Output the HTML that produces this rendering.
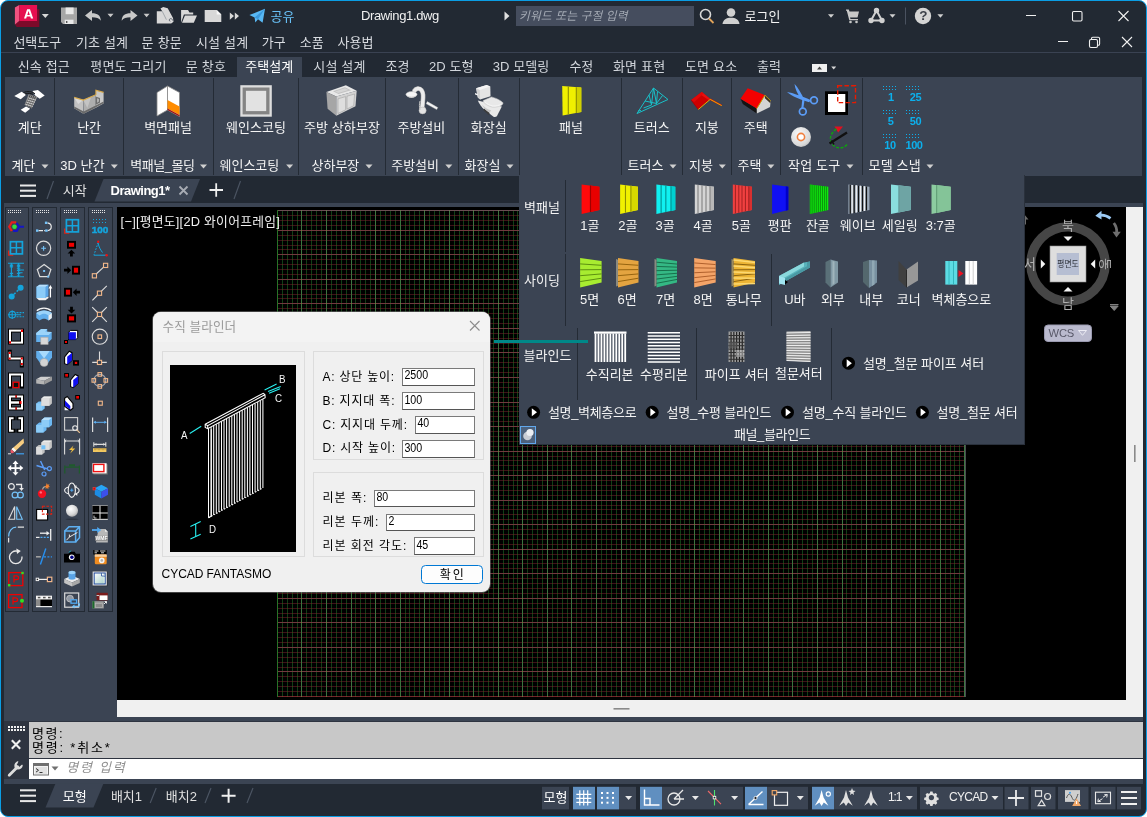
<!DOCTYPE html><html lang="ko"><head><meta charset="utf-8"><title>Drawing1.dwg</title><style>

html,body{margin:0;padding:0;background:#fff;}
body{width:1147px;height:817px;overflow:hidden;position:relative;font-family:"Liberation Sans",sans-serif;}
#win{position:absolute;left:0;top:0;width:1145px;height:815px;border:1px solid #0a9de4;border-radius:8px;background:#222933;overflow:hidden;}
.layer{position:absolute;left:-1px;top:-1px;width:1147px;height:817px;}
.layer>div{position:absolute;box-sizing:border-box;}
.ov{position:absolute;left:0;top:0;pointer-events:none;}
.t{position:absolute;white-space:nowrap;line-height:1;font-family:"Liberation Sans",sans-serif;}
.k{position:absolute;white-space:nowrap;line-height:1;color:transparent;font-family:"Liberation Sans","Noto Sans CJK KR",sans-serif;overflow:hidden;max-width:200px;max-height:16px;}
.tx{font-family:"Liberation Sans","Noto Sans CJK KR",sans-serif;}

</style></head><body>
<svg width="0" height="0" style="position:absolute"><defs><radialGradient id="gcd" cx=".4" cy=".35" r=".8"><stop offset="0" stop-color="#fafafa"/><stop offset=".7" stop-color="#d8d8d8"/><stop offset="1" stop-color="#a8a8a8"/></radialGradient><radialGradient id="gsph" cx=".4" cy=".35" r=".75"><stop offset="0" stop-color="#fff"/><stop offset=".6" stop-color="#d8d8d8"/><stop offset="1" stop-color="#9c9c9c"/></radialGradient><linearGradient id="gdoc" x1="0" y1="0" x2="1" y2="1"><stop offset="0" stop-color="#fff"/><stop offset="1" stop-color="#a8d0c8"/></linearGradient></defs></svg>
<div id="win">
<div class="layer" id="L_base">
<div style="left:0px;top:52px;width:1147px;height:1px;background:#3a4252;"></div>
<div style="left:237px;top:57px;width:65px;height:21px;background:#3b4453;"></div>
<div style="left:5px;top:77px;width:1137px;height:98.7px;background:#3b4453;"></div>
<div style="left:4px;top:203px;width:1139px;height:518px;background:#3b4453;"></div>
<div style="left:117px;top:207px;width:1009px;height:493px;background:#000;"></div>
<div style="left:1126px;top:207px;width:17px;height:510px;background:#f0f0f0;"></div>
<div style="left:117px;top:700px;width:1026px;height:17px;background:#f0f0f0;"></div>
<div style="left:516px;top:6px;width:178px;height:20px;background:#454d5e;"></div>
<div style="left:4px;top:721px;width:1139px;height:59px;background:#2e3440;"></div>
<div style="left:4px;top:779px;width:1139px;height:5px;background:#3b4453;"></div>
<div style="left:29px;top:722px;width:1114px;height:36px;background:#c8c8c8;"></div>
<div style="left:29px;top:759px;width:1114px;height:20px;background:#ffffff;"></div>
<svg class="ov" width="1147" height="817" viewBox="0 0 1147 817"><g fill="none" stroke-width="1" shape-rendering="crispEdges"><path d="M282.5 210V697M287.5 210V697M292.5 210V697M297.5 210V697M306.5 210V697M311.5 210V697M316.5 210V697M321.5 210V697M331.5 210V697M336.5 210V697M341.5 210V697M346.5 210V697M355.5 210V697M360.5 210V697M365.5 210V697M370.5 210V697M380.5 210V697M385.5 210V697M390.5 210V697M395.5 210V697M405.5 210V697M409.5 210V697M414.5 210V697M419.5 210V697M429.5 210V697M434.5 210V697M439.5 210V697M444.5 210V697M454.5 210V697M459.5 210V697M463.5 210V697M468.5 210V697M478.5 210V697M483.5 210V697M488.5 210V697M493.5 210V697M503.5 210V697M508.5 210V697M513.5 210V697M517.5 210V697M527.5 210V697M532.5 210V697M537.5 210V697M542.5 210V697M552.5 210V697M557.5 210V697M562.5 210V697M567.5 210V697M576.5 210V697M581.5 210V697M586.5 210V697M591.5 210V697M601.5 210V697M606.5 210V697M611.5 210V697M616.5 210V697M626.5 210V697M630.5 210V697M635.5 210V697M640.5 210V697M650.5 210V697M655.5 210V697M660.5 210V697M665.5 210V697M675.5 210V697M680.5 210V697M684.5 210V697M689.5 210V697M699.5 210V697M704.5 210V697M709.5 210V697M714.5 210V697M724.5 210V697M729.5 210V697M734.5 210V697M738.5 210V697M748.5 210V697M753.5 210V697M758.5 210V697M763.5 210V697M773.5 210V697M778.5 210V697M783.5 210V697M788.5 210V697M797.5 210V697M802.5 210V697M807.5 210V697M812.5 210V697M822.5 210V697M827.5 210V697M832.5 210V697M837.5 210V697M846.5 210V697M851.5 210V697M856.5 210V697M861.5 210V697M871.5 210V697M876.5 210V697M881.5 210V697M886.5 210V697M896.5 210V697M900.5 210V697M905.5 210V697M910.5 210V697M920.5 210V697M925.5 210V697M930.5 210V697M935.5 210V697M945.5 210V697M950.5 210V697M954.5 210V697M959.5 210V697" stroke="#123e16"/><path d="M301.5 210V697M326.5 210V697M351.5 210V697M375.5 210V697M400.5 210V697M424.5 210V697M449.5 210V697M473.5 210V697M498.5 210V697M522.5 210V697M547.5 210V697M571.5 210V697M596.5 210V697M621.5 210V697M645.5 210V697M670.5 210V697M694.5 210V697M719.5 210V697M743.5 210V697M768.5 210V697M792.5 210V697M817.5 210V697M842.5 210V697M866.5 210V697M891.5 210V697M915.5 210V697M940.5 210V697" stroke="#3c733e"/><g style="mix-blend-mode:lighten"><path d="M277 691.5H965M277 686.5H965M277 681.5H965M277 676.5H965M277 667.5H965M277 662.5H965M277 657.5H965M277 652.5H965M277 642.5H965M277 637.5H965M277 632.5H965M277 627.5H965M277 617.5H965M277 613.5H965M277 608.5H965M277 603.5H965M277 593.5H965M277 588.5H965M277 583.5H965M277 578.5H965M277 568.5H965M277 563.5H965M277 559.5H965M277 554.5H965M277 544.5H965M277 539.5H965M277 534.5H965M277 529.5H965M277 519.5H965M277 514.5H965M277 509.5H965M277 505.5H965M277 495.5H965M277 490.5H965M277 485.5H965M277 480.5H965M277 470.5H965M277 465.5H965M277 460.5H965M277 456.5H965M277 446.5H965M277 441.5H965M277 436.5H965M277 431.5H965M277 421.5H965M277 416.5H965M277 411.5H965M277 406.5H965M277 397.5H965M277 392.5H965M277 387.5H965M277 382.5H965M277 372.5H965M277 367.5H965M277 362.5H965M277 357.5H965M277 348.5H965M277 343.5H965M277 338.5H965M277 333.5H965M277 323.5H965M277 318.5H965M277 313.5H965M277 308.5H965M277 298.5H965M277 294.5H965M277 289.5H965M277 284.5H965M277 274.5H965M277 269.5H965M277 264.5H965M277 259.5H965M277 249.5H965M277 245.5H965M277 240.5H965M277 235.5H965M277 225.5H965M277 220.5H965M277 215.5H965M277 210.5H965" stroke="#3e1218"/><path d="M277 671.5H965M277 647.5H965M277 622.5H965M277 598.5H965M277 573.5H965M277 549.5H965M277 524.5H965M277 500.5H965M277 475.5H965M277 451.5H965M277 426.5H965M277 402.5H965M277 377.5H965M277 352.5H965M277 328.5H965M277 303.5H965M277 279.5H965M277 254.5H965M277 230.5H965" stroke="#703a3e"/><path d="M277 210.5H966" stroke="#6a4e52"/><path d="M277 696.5H965" stroke="#73262a"/></g><path d="M277.5 210V697" stroke="#287328"/><path d="M964.5 210V697" stroke="#3e7642"/><path d="M965.5 210V697" stroke="#4c4c52"/></g>
<g><path d="M14.900 24.600l4.300-3.600H37.100V9.300h2.200V27H16.700z" fill="#7d0a2a"/><path d="M14.900 7.500l4.300-2.500v16l-4.300 3.600z" fill="#f0527f"/><rect x="19.200" y="5" width="17.900" height="16" fill="#e60f50"/><path d="M24 18.500l3.100-9.200h2.900l3.200 9.200h-2.300l-.6-1.900h-3.500l-.6 1.900zM27.300 14.900h2.500l-1.250-4z" fill="#fff"/></g>
<path d="M41.8 14h7l-3.5 4z" fill="#d8d8d8"/>
<g><path d="M61 7.500h16v16.500h-14l-2-2z" fill="#a6a6a6"/><rect x="65.600" y="7.500" width="8" height="6.700" fill="#e8e8e8"/><rect x="64.700" y="19.700" width="8.800" height="4.300" fill="#e8e8e8"/><rect x="66" y="21" width="1.400" height="2" fill="#555"/></g>
<path d="M85 15.5l7-5.5v3.3c5.500 0 8.800 2.400 8.800 7.400-1.800-2.600-4.400-3.400-8.800-3.400v3.700z" fill="#c8c8c8"/>
<path d="M107.5 13.750h6l-3 3.500z" fill="#c8c8c8"/>
<path d="M137.5 15.5l-7-5.500v3.300c-5.500 0-8.800 2.400-8.800 7.400 1.800-2.600 4.400-3.400 8.800-3.400v3.700z" fill="#c8c8c8"/>
<path d="M143.6 13.750h6l-3 3.500z" fill="#c8c8c8"/>
<g><path d="M156.800 23.600V11.200h5.400l-1.700-2.600 2.700-1.500 4.500 1.100 5.300 9.800.5 3.800-2.300 1.800z" fill="#d8d8d8"/><path d="M170.300 21.300c-1.300-.2-1.500-2.200 0-2.600 1.300-.3 2.300 .6 2.200 1.800" fill="none" stroke="#555c68" stroke-width=".9"/><path d="M162.200 11.200l4.200 8.500" stroke="#8a9098" stroke-width=".7"/></g>
<g fill="#d8d8d8"><path d="M181.100 22.700V10.100h6.900l1.500 2.400h3.700v1.900h-9.300z"/><path d="M184.900 15.400H197l-3.200 7.300h-11.800z"/></g>
<path d="M204.700 10.100h12l4.600 4.300v7.500h-16.600z" fill="#d8d8d8"/><path d="M216.700 10.100v4.300h4.600z" fill="#f8f8f8"/>
<path d="M229.800 12.500l4.200 3.600-4.200 3.600zM234.800 12.500l4.200 3.600-4.200 3.600z" fill="#d8d8d8"/>
<path d="M249.400 15l15.600-6.200-2.400 14-4.600-3.500-2.700 3.200-.7-4.900z" fill="#58b8f4"/><path d="M254.600 17.600L265 8.800l-7 10.500" fill="#3a98dc"/>
<text class="tx" x="270.5" y="21.38" font-size="13" fill="#68c0f6" textLength="23.9">공유</text>
<path d="M504.5 11.500l5 4.500-5 4.500z" fill="#e0e0e0"/>
<text class="tx" x="519" y="20.39" font-size="11.7" font-style="italic" fill="#a4aab4" textLength="108.5">키워드 또는 구절 입력</text>
<g fill="none"><circle cx="705.500" cy="14.500" r="5" stroke="#d8d8d8" stroke-width="1.6"/><path d="M709 18.500l4.500 4.500" stroke="#e0a35a" stroke-width="1.8"/></g>
<g fill="#d0d0d0"><circle cx="731" cy="12.500" r="4.300"/><path d="M722.500 24c.5-4.500 4-6.300 8.500-6.300s8 1.800 8.500 6.300z"/></g>
<text class="tx" x="744.5" y="21.38" font-size="13" fill="#f4f4f4" textLength="35.9">로그인</text>
<path d="M828 14.250h6l-3 3.500z" fill="#d0d0d0"/>
<g fill="#c8c8c8"><path d="M846 9.500h2.800l.7 2h9.500l-1.500 6h-7.500l.5 1.500h7.500v1.200h-8.700l-2.500-9.500h-.8z"/><circle cx="850.500" cy="22" r="1.300"/><circle cx="856.500" cy="22" r="1.300"/></g>
<g stroke="#d0d0d0" stroke-width="2" fill="#d0d0d0"><path d="M876.500 10.500l-5.500 10h11z" fill="none"/><circle cx="876.500" cy="10.500" r="1.700"/><circle cx="871" cy="20.500" r="1.700"/><circle cx="882" cy="20.500" r="1.700"/></g>
<path d="M889.5 14.250h6l-3 3.500z" fill="#d0d0d0"/>
<rect x="905" y="7.500" width="1" height="17" fill="#4a5260"/>
<circle cx="923" cy="16" r="8.200" fill="#d4d4d4"/>
<path d="M937.4 14.250h6l-3 3.500z" fill="#d0d0d0"/>
<g stroke="#f0f0f0" stroke-width="1.100" fill="none"><path d="M1026 15.500h10"/><rect x="1072.500" y="11.500" width="9.500" height="9.500" rx="1.200"/><path d="M1118.500 11l10 10M1128.500 11l-10 10"/><path d="M1058 41.500h10"/><rect x="1089.500" y="39.500" width="8" height="8" rx="1.500"/><path d="M1091.500 39.500v-1c0-.8.5-1.300 1.300-1.300h5.500c.8 0 1.300.5 1.300 1.300v5.500c0 .8-.5 1.300-1.300 1.300h-.8"/><path d="M1122 37l10 10M1132 37l-10 10"/></g>
<text class="tx" x="13.4" y="46.88" font-size="13" fill="#d9dce1" textLength="47.8">선택도구</text>
<text class="tx" x="75.9" y="46.88" font-size="13" fill="#d9dce1" textLength="52.1">기초 설계</text>
<text class="tx" x="141.6" y="46.88" font-size="13" fill="#d9dce1" textLength="40.2">문 창문</text>
<text class="tx" x="196" y="46.88" font-size="13" fill="#d9dce1" textLength="52.1">시설 설계</text>
<text class="tx" x="261.7" y="46.88" font-size="13" fill="#d9dce1" textLength="23.9">가구</text>
<text class="tx" x="299.7" y="46.88" font-size="13" fill="#d9dce1" textLength="23.9">소품</text>
<text class="tx" x="337.6" y="46.88" font-size="13" fill="#d9dce1" textLength="35.9">사용법</text>
<text class="tx" x="17.7" y="71.38" font-size="13" fill="#d2d6dc" textLength="52.1">신속 접근</text>
<text class="tx" x="90.3" y="71.38" font-size="13" fill="#d2d6dc" textLength="76.1">평면도 그리기</text>
<text class="tx" x="185.8" y="71.38" font-size="13" fill="#d2d6dc" textLength="40.2">문 창호</text>
<text class="tx" x="313.3" y="71.38" font-size="13" fill="#d2d6dc" textLength="52.1">시설 설계</text>
<text class="tx" x="385.6" y="71.38" font-size="13" fill="#d2d6dc" textLength="23.9">조경</text>
<text class="tx" x="429" y="71.38" font-size="13" fill="#d2d6dc" textLength="44.4">2D 도형</text>
<text class="tx" x="492.8" y="71.38" font-size="13" fill="#d2d6dc" textLength="56.3">3D 모델링</text>
<text class="tx" x="569.4" y="71.38" font-size="13" fill="#d2d6dc" textLength="23.9">수정</text>
<text class="tx" x="613" y="71.38" font-size="13" fill="#d2d6dc" textLength="52.1">화면 표현</text>
<text class="tx" x="685" y="71.38" font-size="13" fill="#d2d6dc" textLength="52.1">도면 요소</text>
<text class="tx" x="757" y="71.38" font-size="13" fill="#d2d6dc" textLength="23.9">출력</text>
<text class="tx" x="245.3" y="71.38" font-size="13" fill="#ffffff" textLength="47.8">주택설계</text>
<rect x="812" y="64" width="15" height="8" fill="#f0f0f0"/><path d="M817 69.500l2.500-3 2.500 3z" fill="#444"/>
<path d="M831.2 66.5h5l-2.500 3z" fill="#d8d8d8"/>
<rect x="54" y="78" width="1" height="97" fill="#242b35"/>
<rect x="123" y="78" width="1" height="97" fill="#242b35"/>
<rect x="213" y="78" width="1" height="97" fill="#242b35"/>
<rect x="298" y="78" width="1" height="97" fill="#242b35"/>
<rect x="385" y="78" width="1" height="97" fill="#242b35"/>
<rect x="458" y="78" width="1" height="97" fill="#242b35"/>
<rect x="519" y="78" width="1" height="97" fill="#242b35"/>
<rect x="621" y="78" width="1" height="97" fill="#242b35"/>
<rect x="682" y="78" width="1" height="97" fill="#242b35"/>
<rect x="731" y="78" width="1" height="97" fill="#242b35"/>
<rect x="780" y="78" width="1" height="97" fill="#242b35"/>
<rect x="862" y="78" width="1" height="97" fill="#242b35"/>
<text class="tx" x="17.74" y="131.88" font-size="13" fill="#f4f4f4" textLength="23.9">계단</text>
<text class="tx" x="77.14" y="131.88" font-size="13" fill="#f4f4f4" textLength="23.9">난간</text>
<text class="tx" x="144.18" y="131.88" font-size="13" fill="#f4f4f4" textLength="47.8">벽면패널</text>
<text class="tx" x="226.1" y="131.88" font-size="13" fill="#f4f4f4" textLength="59.8">웨인스코팅</text>
<text class="tx" x="303.88" y="131.88" font-size="13" fill="#f4f4f4" textLength="76.1">주방 상하부장</text>
<text class="tx" x="397.48" y="131.88" font-size="13" fill="#f4f4f4" textLength="47.8">주방설비</text>
<text class="tx" x="470.86" y="131.88" font-size="13" fill="#f4f4f4" textLength="35.9">화장실</text>
<text class="tx" x="559.04" y="131.88" font-size="13" fill="#f4f4f4" textLength="23.9">패널</text>
<text class="tx" x="633.86" y="131.88" font-size="13" fill="#f4f4f4" textLength="35.9">트러스</text>
<text class="tx" x="694.94" y="131.88" font-size="13" fill="#f4f4f4" textLength="23.9">지붕</text>
<text class="tx" x="743.84" y="131.88" font-size="13" fill="#f4f4f4" textLength="23.9">주택</text>
<text class="tx" x="11.4" y="170.38" font-size="13" fill="#f4f4f4" textLength="23.9">계단</text>
<path d="M41.5 164.5h7l-3.500 4z" fill="#d0d0d0"/>
<text class="tx" x="60.2" y="170.38" font-size="13" fill="#f4f4f4" textLength="44.4">3D 난간</text>
<path d="M110.8 164.5h7l-3.500 4z" fill="#d0d0d0"/>
<text class="tx" x="130.2" y="170.38" font-size="13" fill="#f4f4f4" textLength="64.8">벽패널_몰딩</text>
<path d="M200 164.5h7l-3.500 4z" fill="#d0d0d0"/>
<text class="tx" x="219.5" y="170.38" font-size="13" fill="#f4f4f4" textLength="59.8">웨인스코팅</text>
<path d="M286.1 164.5h7l-3.500 4z" fill="#d0d0d0"/>
<text class="tx" x="311.5" y="170.38" font-size="13" fill="#f4f4f4" textLength="47.8">상하부장</text>
<path d="M365.5 164.5h7l-3.500 4z" fill="#d0d0d0"/>
<text class="tx" x="391.2" y="170.38" font-size="13" fill="#f4f4f4" textLength="47.8">주방설비</text>
<path d="M445.3 164.5h7l-3.500 4z" fill="#d0d0d0"/>
<text class="tx" x="464.5" y="170.38" font-size="13" fill="#f4f4f4" textLength="35.9">화장실</text>
<path d="M506.5 164.5h7l-3.500 4z" fill="#d0d0d0"/>
<text class="tx" x="627.5" y="170.38" font-size="13" fill="#f4f4f4" textLength="35.9">트러스</text>
<path d="M669.5 164.5h7l-3.500 4z" fill="#d0d0d0"/>
<text class="tx" x="689" y="170.38" font-size="13" fill="#f4f4f4" textLength="23.9">지붕</text>
<path d="M718.8 164.5h7l-3.500 4z" fill="#d0d0d0"/>
<text class="tx" x="737.5" y="170.38" font-size="13" fill="#f4f4f4" textLength="23.9">주택</text>
<path d="M767.4 164.5h7l-3.500 4z" fill="#d0d0d0"/>
<text class="tx" x="788.1" y="170.38" font-size="13" fill="#f4f4f4" textLength="52.1">작업 도구</text>
<path d="M846.5 164.5h7l-3.500 4z" fill="#d0d0d0"/>
<text class="tx" x="868.6" y="170.38" font-size="13" fill="#f4f4f4" textLength="52.1">모델 스냅</text>
<path d="M926.5 164.5h7l-3.500 4z" fill="#d0d0d0"/>
<g><path d="M28.500 94.300l9 2.500-5.800 11.800-7.200-3.500z" fill="#8e8e8e"/><path d="M30.200 95l-5 10.300M32 95.500l-5 10.800M33.800 96l-5 11.200M35.600 96.500l-5 11.600" stroke="#2c2c2c" stroke-width=".7" fill="none"/><path d="M28 97.800l8 2.400M27 99.900l8 2.400M26 102l8 2.400M25 104.100l7.800 2.400" stroke="#e8e8e8" stroke-width=".7"/><path d="M14.300 96l7.300-4.200 4.500 2.900-5.400 4.500z" fill="#fff"/><path d="M32.500 91l5.400-1 6.800 5.600-5 3.200-4.500-3.200z" fill="#fff"/><path d="M20.700 109.700l5.400-3.200 4.100 2.200-5 4.100z" fill="#fff"/><path d="M23.500 92.600c3.500-1.700 9-1.200 11.500 1.200M25 94c3-1 6-.8 8 .4" stroke="#181818" stroke-width="1" fill="none"/></g>
<g><path d="M74.200 97.400l9.100 2.700v13.600l-9.100-5.400z" fill="#c2c2c2"/><path d="M74.200 97.400l4 6.600 5.100-3.900z" fill="#dadada"/><path d="M83.300 100.100l12.600-5.400v13l-12.200 6z" fill="#aeaeae"/><path d="M83.300 100.100l4 8 4-11.400z" fill="#c4c4c4"/><path d="M95.900 90.200l7.700 2.200v11l-7.700 4.300z" fill="#c8c8c8"/><path d="M95.500 96.500l4.500 1.500v4.500l-4.500 2.500z" fill="#6e6e6e"/><path d="M97 98.200l2 .7v2.600l-2 1.200z" fill="#b0b0b0"/><path d="M74.200 108.300l9.500 5.400 19.900-10.400v-1.800l-19.900 10-9.500-5z" fill="#6a6a6a"/><path d="M74.200 97.400l9.100 2.700 12.600-5.400v-4.500l7.700 2.200" stroke="#d8a848" stroke-width="1.100" fill="none"/></g>
<g><path d="M157 92.500l10.500-6.500v24l-10.500 6z" fill="#fff" stroke="#888" stroke-width=".8"/><path d="M167.500 86l12 6.500v24l-12-6.500z" fill="#fff" stroke="#888" stroke-width=".8"/><path d="M167.500 100l12 6.500v8.500l-12-6.500z" fill="#ff8c00"/><path d="M167.500 108.500l12 6.500v1.500l-12-6.500z" fill="#a01010"/></g>
<g><rect x="240.300" y="85.200" width="31.500" height="31.500" fill="#dedede"/><rect x="242.600" y="87.500" width="26.900" height="26.900" fill="#848484"/><rect x="245.900" y="90.800" width="20.300" height="20.300" fill="#e2e2e2"/></g>
<g><path d="M326.400 91.900l19.500-6.700 10.800 5.600-20.400 5.800z" fill="#e8e8e8"/><path d="M333 91.300l12-4 6 3-12.500 3.800z" fill="#c2c2c2"/><path d="M335 91.600l10-3.300 3.500 1.800-10.300 3z" fill="#d6d6d6"/><path d="M326.400 91.900l9.900 4.700v19.100l-8.700-6.900z" fill="#a6a6a6"/><path d="M336.300 96.600l20.400-5.800-1.200 15.400-19.200 9.500z" fill="#d2d2d2"/><path d="M338 98.800l7.600-2.200v13.200l-7.600 3.700zM347 96.200l7.600-2.200-.9 11.700-6.700 3.300z" fill="#dedede" stroke="#a2a2a2" stroke-width=".6"/></g>
<g><path d="M422.300 110.500c-.5-5 1.200-10 .8-15.500-.3-4-2.300-6.800-5.300-6.500-1.500.2-2.600 1-3.400 2.300" fill="none" stroke="#b4b4b4" stroke-width="4.600" stroke-linecap="round"/><path d="M422.300 110.500c-.5-5 1.200-10 .8-15.500-.3-4-2.300-6.800-5.300-6.500-1.500.2-2.600 1-3.400 2.300" fill="none" stroke="#ececec" stroke-width="3.400" stroke-linecap="round"/><ellipse cx="422.600" cy="110.500" rx="3.600" ry="3.400" fill="#e4e4e4" stroke="#b0b0b0" stroke-width=".5"/><path d="M420 101c-.8 3-.8 6 0 9" stroke="#c4c4c4" stroke-width="1" fill="none"/><path d="M406 94.600c1 4.600 10 4.600 11 0z" fill="#d2d2d2"/><ellipse cx="411.500" cy="94.300" rx="5.500" ry="2.700" fill="#f6f6f6" stroke="#c0c0c0" stroke-width=".5"/><path d="M427.300 101.600l10.500 6-1.100 2-10.500-5.800z" fill="#f4f4f4" stroke="#c0c0c0" stroke-width=".4"/></g>
<g><path d="M477.800 100.600c1.500 3.500 3.500 6.500 6.400 8.800l9.300 7.300c1.300.5 2.500.2 3.400-.5l4.900-9.800z" fill="#e9e9e9"/><path d="M484.200 108.400l5.500 4.500-1 2-5.500-5z" fill="#3c3c3c"/><path d="M482 104.500c2.500 3 5.500 5 9 5.800l-1.300 2.500c-3.800-2.200-6.200-4.800-7.700-8.300z" fill="#c6c6c6"/><path d="M476.100 88.300l10.500-3.400 3.700 1.700.2 9.600-10.300 3.400-2.400-2z" fill="#e4e4e4"/><path d="M476.100 88.300l10.500-3.400 3.700 1.700-10.600 3.500z" fill="#f4f4f4"/><path d="M476.100 88.300l3.600 1.800.5 9.500-2.400-2z" fill="#d2d2d2"/><path d="M475 93.100l2.800 1v1.300l-2.800-1z" fill="#f4f4f4"/><path d="M483.200 100.600l8.300-3.700c4 1 8 2.800 10.800 5.100.8.800.8 1.500.5 2-1 1.500-2.800 2.300-4.500 2.700-2 .5-4 .6-5.800.5-3.500-.8-6.300-2.400-8.300-4.200-.8-.8-1.200-1.600-1-2.400z" fill="#e8e8e8" stroke="#c2c2c2" stroke-width=".5"/><path d="M484.800 101.800c2 2 4.700 3.500 8 4.200 3 .2 6.500-.5 8.700-2" fill="none" stroke="#f8f8f8" stroke-width=".8"/></g>
<g><path d="M562.200 86l19.100 1.600v24.400l-18.700 3.400z" fill="#f0f000"/><path d="M576.300 87.200l5 .4v24.400l-5 .9z" fill="#d0d000"/><path d="M568.300 86.500v27.800M576.300 87.200v25.700" stroke="#8c8c00" stroke-width="1.100"/></g>
<g fill="none" stroke="#19c0c8" stroke-width="1"><path d="M637 113.500l16.500-25.500 14.500 11.500zM638 111l3-.5M645 101l11.500 2.500M649 95l2.500 10M653.500 88l-2 17M653.500 88l3 15.500M657.500 91.500l-1 12M656.500 103.500l6-8M651.500 105l-8 3"/></g>
<g><path d="M691.200 100.100l10.500-8.100 8.700 7-12.200 10.200z" fill="#cc0000"/><path d="M701.700 92l8.700 7-1.500 1.300-9-6.300z" fill="#e81010"/><path d="M691.200 100.100l10.500-8.100 2 1.600-9.500 8.500z" fill="#e00808"/><path d="M710.400 98.600l11.500 6.200-.5 1.200-11.700-6z" fill="#e00808"/><path d="M698.200 109.600l12-10.200 11.500 6.200" stroke="#e0b000" stroke-width="1" fill="none"/><path d="M691.200 100.100l7 9.300" stroke="#a80000" stroke-width=".8"/></g>
<g><path d="M740.500 98.700l16.300 9.800v4.900l-14-9.400z" fill="#141414"/><path d="M764.900 95.200l5.800 5.600-.7 6.300-13.200 6.300v-4.900z" fill="#d4d4d4"/><path d="M764.900 95.200l5.800 5.600-.3 2.500-5.500-5z" fill="#3a3020"/><path d="M740.500 98.700l7.200-10.400 17.200 6.900-8.100 13.300z" fill="#f40000"/><path d="M756.800 108.500l8.100-13.300" stroke="#c8a000" stroke-width="1"/><path d="M764.900 95.200l5.800 5.600" stroke="#c8a000" stroke-width=".8"/></g>
<g><rect x="825" y="91.300" width="23" height="23.700" fill="#000"/><rect x="828" y="94" width="17.300" height="18" fill="#fff"/><rect x="837.700" y="85.800" width="17.800" height="16.800" fill="none" stroke="#e81a00" stroke-width="1.400" stroke-dasharray="4.500 2.200"/></g>
<g><circle cx="801" cy="137" r="10" fill="url(#gcd)"/><circle cx="801" cy="137" r="3.600" fill="#fff" stroke="#f08040" stroke-width="1.600"/></g>
<g><path d="M834.500 126.500h8.500l-4.800 6z" fill="#e01020"/><path d="M836.500 129c-6 3.500-8 11-4 15.500 4 4.500 11 4.500 14.500 0" fill="none" stroke="#10a010" stroke-width="1.500" stroke-dasharray="3 1.500"/><path d="M829.500 143.500l17.500-11" stroke="#111" stroke-width="2.400"/><path d="M831.500 140.500l2.500 4" stroke="#111" stroke-width="1.500"/></g>
<g fill="#0cb0ec" shape-rendering="crispEdges"><rect x="883" y="86" width="1" height="1"/><rect x="886" y="86" width="1" height="1"/><rect x="889" y="86" width="1" height="1"/><rect x="892" y="86" width="1" height="1"/><rect x="895" y="86" width="1" height="1"/><rect x="883" y="89" width="1" height="1"/><rect x="886" y="89" width="1" height="1"/><rect x="889" y="89" width="1" height="1"/><rect x="892" y="89" width="1" height="1"/><rect x="895" y="89" width="1" height="1"/><rect x="883" y="110" width="1" height="1"/><rect x="886" y="110" width="1" height="1"/><rect x="889" y="110" width="1" height="1"/><rect x="892" y="110" width="1" height="1"/><rect x="895" y="110" width="1" height="1"/><rect x="883" y="113" width="1" height="1"/><rect x="886" y="113" width="1" height="1"/><rect x="889" y="113" width="1" height="1"/><rect x="892" y="113" width="1" height="1"/><rect x="895" y="113" width="1" height="1"/><rect x="883" y="134" width="1" height="1"/><rect x="886" y="134" width="1" height="1"/><rect x="889" y="134" width="1" height="1"/><rect x="892" y="134" width="1" height="1"/><rect x="895" y="134" width="1" height="1"/><rect x="883" y="137" width="1" height="1"/><rect x="886" y="137" width="1" height="1"/><rect x="889" y="137" width="1" height="1"/><rect x="892" y="137" width="1" height="1"/><rect x="895" y="137" width="1" height="1"/><rect x="906" y="86" width="1" height="1"/><rect x="909" y="86" width="1" height="1"/><rect x="912" y="86" width="1" height="1"/><rect x="915" y="86" width="1" height="1"/><rect x="918" y="86" width="1" height="1"/><rect x="906" y="89" width="1" height="1"/><rect x="909" y="89" width="1" height="1"/><rect x="912" y="89" width="1" height="1"/><rect x="915" y="89" width="1" height="1"/><rect x="918" y="89" width="1" height="1"/><rect x="906" y="110" width="1" height="1"/><rect x="909" y="110" width="1" height="1"/><rect x="912" y="110" width="1" height="1"/><rect x="915" y="110" width="1" height="1"/><rect x="918" y="110" width="1" height="1"/><rect x="906" y="113" width="1" height="1"/><rect x="909" y="113" width="1" height="1"/><rect x="912" y="113" width="1" height="1"/><rect x="915" y="113" width="1" height="1"/><rect x="918" y="113" width="1" height="1"/><rect x="906" y="134" width="1" height="1"/><rect x="909" y="134" width="1" height="1"/><rect x="912" y="134" width="1" height="1"/><rect x="915" y="134" width="1" height="1"/><rect x="918" y="134" width="1" height="1"/><rect x="906" y="137" width="1" height="1"/><rect x="909" y="137" width="1" height="1"/><rect x="912" y="137" width="1" height="1"/><rect x="915" y="137" width="1" height="1"/><rect x="918" y="137" width="1" height="1"/></g>
<g fill="#5b9cf6"><path d="M794.500 84c2.500 2 6 8 8.500 13l-2.300 1.500c-3.300-4.800-5.700-10-6.200-14.500zM787 92c6 1 15 4 23.500 8l-1.200 2.300c-8.500-2.500-17.800-6-22.300-10.300z"/><path d="M802.300 99.500l2.200.8-1.200 8.200-2-.3z"/></g><circle cx="814" cy="100.300" r="3.400" fill="none" stroke="#5b9cf6" stroke-width="1.700"/><circle cx="802.800" cy="111.500" r="3.400" fill="none" stroke="#5b9cf6" stroke-width="1.700"/>
<rect x="5.5" y="207.500" width="23" height="404" fill="#3b4453" stroke="#232a34" stroke-width="1"/>
<rect x="32.5" y="207.500" width="24" height="404" fill="#3b4453" stroke="#232a34" stroke-width="1"/>
<rect x="60.5" y="207.500" width="24" height="404" fill="#3b4453" stroke="#232a34" stroke-width="1"/>
<rect x="88.5" y="207.500" width="24" height="404" fill="#3b4453" stroke="#232a34" stroke-width="1"/>
<g fill="#e4e4e4"><rect x="8" y="210" width="1" height="1"/><rect x="8" y="212" width="1" height="1"/><rect x="10" y="210" width="1" height="1"/><rect x="10" y="212" width="1" height="1"/><rect x="12" y="210" width="1" height="1"/><rect x="12" y="212" width="1" height="1"/><rect x="14" y="210" width="1" height="1"/><rect x="14" y="212" width="1" height="1"/><rect x="16" y="210" width="1" height="1"/><rect x="16" y="212" width="1" height="1"/><rect x="18" y="210" width="1" height="1"/><rect x="18" y="212" width="1" height="1"/><rect x="20" y="210" width="1" height="1"/><rect x="20" y="212" width="1" height="1"/><rect x="36" y="210" width="1" height="1"/><rect x="36" y="212" width="1" height="1"/><rect x="38" y="210" width="1" height="1"/><rect x="38" y="212" width="1" height="1"/><rect x="40" y="210" width="1" height="1"/><rect x="40" y="212" width="1" height="1"/><rect x="42" y="210" width="1" height="1"/><rect x="42" y="212" width="1" height="1"/><rect x="44" y="210" width="1" height="1"/><rect x="44" y="212" width="1" height="1"/><rect x="46" y="210" width="1" height="1"/><rect x="46" y="212" width="1" height="1"/><rect x="48" y="210" width="1" height="1"/><rect x="48" y="212" width="1" height="1"/><rect x="64" y="210" width="1" height="1"/><rect x="64" y="212" width="1" height="1"/><rect x="66" y="210" width="1" height="1"/><rect x="66" y="212" width="1" height="1"/><rect x="68" y="210" width="1" height="1"/><rect x="68" y="212" width="1" height="1"/><rect x="70" y="210" width="1" height="1"/><rect x="70" y="212" width="1" height="1"/><rect x="72" y="210" width="1" height="1"/><rect x="72" y="212" width="1" height="1"/><rect x="74" y="210" width="1" height="1"/><rect x="74" y="212" width="1" height="1"/><rect x="76" y="210" width="1" height="1"/><rect x="76" y="212" width="1" height="1"/><rect x="92" y="210" width="1" height="1"/><rect x="92" y="212" width="1" height="1"/><rect x="94" y="210" width="1" height="1"/><rect x="94" y="212" width="1" height="1"/><rect x="96" y="210" width="1" height="1"/><rect x="96" y="212" width="1" height="1"/><rect x="98" y="210" width="1" height="1"/><rect x="98" y="212" width="1" height="1"/><rect x="100" y="210" width="1" height="1"/><rect x="100" y="212" width="1" height="1"/><rect x="102" y="210" width="1" height="1"/><rect x="102" y="212" width="1" height="1"/><rect x="104" y="210" width="1" height="1"/><rect x="104" y="212" width="1" height="1"/></g>
<g transform="translate(8 218)"><path d="M8.200 4.300H3.800L1.200 8.700l2.600 4.300" stroke="#e81e1e" stroke-width="2.200" fill="none"/><path d="M8.600 5l2.600 3.700-2.400 4.300H5" stroke="#1616c4" stroke-width="2.200" fill="none"/><path d="M11 8.700h5" stroke="#1616c4" stroke-width="2"/><circle cx="6.500" cy="8.700" r="2.300" fill="#30e040"/></g>
<g transform="translate(8 240)"><path d="M.8 10.500v4.500h4.500" stroke="#e82010" stroke-width="1.400" fill="none"/><rect x="2.400" y="1.700" width="12" height="12.200" fill="none" stroke="#14a4dc" stroke-width="1.700"/><path d="M8.400 1.700v12.200M2.400 7.800h12" stroke="#14a4dc" stroke-width="1.500"/></g>
<g transform="translate(8 262)"><g stroke="#14a4dc" fill="none" stroke-width="1.100"><path d="M0 1.200h16M0 14.800h16M3.400 1.200v13.600M10.600 1.200v13.600M10.600 8h5.400M10.600 10.800h4"/><path d="M1.800 2.800l3.200 2.400M5 2.800L1.800 5.200M1.800 11l3.200 2.400M5 11l-3.200 2.400M9 2.800l3.200 2.400M12.200 2.800L9 5.200M9 6.400l3.200 2.400M12.200 6.400L9 8.800M9 11l3.200 2.400M12.200 11L9 13.400"/></g></g>
<g transform="translate(8 284)"><circle cx="3.700" cy="12.600" r="3" fill="#14a4dc"/><circle cx="12.600" cy="3.800" r="3" fill="#14a4dc"/><path d="M6 10.300l4.400-4.400" stroke="#14a4dc" stroke-width="1.600" stroke-dasharray="2.200 1.600"/></g>
<g transform="translate(8 306)"><g stroke="#14a4dc" fill="none" stroke-width="1.100"><circle cx="4.200" cy="8.700" r="3.300"/><path d="M0 8.700h13M4.200 4.500v8.400"/><path d="M8.500 6.600h7.500M8.500 10.700h7.500" stroke-dasharray="2 1"/></g></g>
<g transform="translate(8 328)"><rect x="2" y="2.600" width="12" height="12" fill="none" stroke="#000" stroke-width="4"/><rect x="2" y="2.600" width="12" height="12" fill="none" stroke="#fff" stroke-width="2"/><rect x="13" y="1.600" width="2" height="2.400" fill="#f00000"/><rect x="1" y="13.200" width="2" height="2.400" fill="#f00000"/></g>
<g transform="translate(8 350)"><path d="M1.700 1.800V8.500H13.800V15.400" fill="none" stroke="#000" stroke-width="4" stroke-linecap="square"/><path d="M1.700 1.800V8.500H13.800V15.400" fill="none" stroke="#fff" stroke-width="2" stroke-linecap="butt"/><rect x=".7" y="2" width="2" height="2" fill="#f00000"/><rect x=".7" y="7.500" width="2" height="2" fill="#f00000"/><rect x="12.800" y="7.500" width="2" height="2" fill="#f00000"/><rect x="12.800" y="13" width="2" height="2" fill="#f00000"/></g>
<g transform="translate(8 372)"><path d="M2 14.500V2.500H14V14.500" fill="none" stroke="#000" stroke-width="4" stroke-linecap="square"/><path d="M2 14.500V2.500H14V14.500" fill="none" stroke="#fff" stroke-width="2" stroke-linecap="butt"/><rect x="5.200" y="10.200" width="5.600" height="5.400" fill="#101010" stroke="#f00000" stroke-width="1.300"/></g>
<g transform="translate(8 394)"><rect x="2" y="2.500" width="12" height="12" fill="none" stroke="#000" stroke-width="4"/><rect x="2" y="2.500" width="12" height="12" fill="none" stroke="#fff" stroke-width="2"/><rect x="3" y="6" width="9" height="5" fill="#000"/><rect x="3" y="7.300" width="8" height="2.400" fill="#fff"/><rect x="7.300" y="1" width="1.600" height="3" fill="#a00"/><rect x="7.300" y="13" width="1.600" height="3" fill="#a00"/><rect x="11.500" y="7" width="2" height="3" fill="#f00000"/></g>
<g transform="translate(8 416)"><path d="M5.600 2.300H2V14.800H5.600" fill="none" stroke="#000" stroke-width="4" stroke-linecap="square"/><path d="M5.600 2.300H2V14.800H5.600" fill="none" stroke="#fff" stroke-width="2" stroke-linecap="butt"/><path d="M10.400 2.300H14V14.800H10.400" fill="none" stroke="#000" stroke-width="4" stroke-linecap="square"/><path d="M10.400 2.300H14V14.800H10.400" fill="none" stroke="#fff" stroke-width="2" stroke-linecap="butt"/></g>
<g transform="translate(8 438)"><path d="M15.500 .5l.5 4.500-9.500 9-3-2.800z" fill="#f6cc80"/><path d="M6.500 14l-3-2.800 1.700-1.700 3 3z" fill="#f8f8f8"/><path d="M3.300 11.400c-1.500 1.500-.8 3.800 1 3.800 1 0 1.600-.6 2-1.200z" fill="#f05868"/><path d="M0 15.800h3" stroke="#e0e0e0" stroke-width="1"/><path d="M8 15.800h8" stroke="#40a0f0" stroke-width="1.200"/></g>
<g transform="translate(8 460)"><path d="M7.500 .6l3 3.400H8.400v3.300h3.400V5.100l3.500 3-3.500 3V8.900H8.400v3.300h2.100l-3 3.400-3-3.400h2.100V8.900H3.200v2.200L-.2 8.100l3.400-3v2.200h3.400V4H4.500z" fill="#fff"/></g>
<g transform="translate(8 482)"><circle cx="3.400" cy="4.500" r="2.900" fill="none" stroke="#e8e8e8" stroke-width="1.200"/><path d="M8 2.500h5.500v4" fill="none" stroke="#e8e8e8" stroke-width="1.300"/><path d="M11.200 6l2.300 3 2.300-3z" fill="#e8e8e8"/><circle cx="7" cy="13" r="2.900" fill="none" stroke="#74c2f8" stroke-width="1.200"/><circle cx="12.400" cy="13" r="2.900" fill="none" stroke="#74c2f8" stroke-width="1.200"/></g>
<g transform="translate(8 504)"><path d="M.7 15.300h6V2.600z" fill="none" stroke="#dcdcdc" stroke-width="1.100"/><path d="M8.700 2.600v12.700h5.600z" fill="none" stroke="#74c2f8" stroke-width="1.100"/></g>
<g transform="translate(8 526)"><path d="M.6 10.600C.6 5 4 1.200 8.200 1.200" fill="none" stroke="#74c2f8" stroke-width="1.200"/><path d="M9.800 1.200H16M.6 11.800v4.800" stroke="#e0e0e0" stroke-width="1.200"/></g>
<g transform="translate(8 548)"><path d="M9.200 3.200A6.300 6.300 0 1 0 14 8.500" fill="none" stroke="#e8e8e8" stroke-width="1.300"/><path d="M8.300 .6l4.500 2.400-3.800 3z" fill="#e8e8e8"/></g>
<g transform="translate(8 570)"><rect x=".8" y="2.600" width="14" height="13" fill="none" stroke="#f00000" stroke-width="1.300"/><rect x="13.300" y="1.800" width="2.400" height="2.400" fill="#30e020"/><rect x="0" y="14" width="2.400" height="2.400" fill="#30e020"/><path d="M6 12.500V5.800h2.400c1.500 0 2.200.8 2.200 1.900s-.7 1.900-2.200 1.900H6" fill="none" stroke="#f00000" stroke-width="1.200"/></g>
<g transform="translate(8 592)"><rect x=".6" y="2.600" width="13.400" height="13" fill="none" stroke="#f00000" stroke-width="1.300"/><circle cx="14" cy="8.800" r="2" fill="#30e020"/><path d="M5 12.500V5.800h2.400c1.500 0 2.200.8 2.200 1.900s-.7 1.900-2.200 1.900H5" fill="none" stroke="#f00000" stroke-width="1.200"/></g>
<g transform="translate(36 218)"><path d="M2.500 12.600h7" stroke="#e8e8e8" stroke-width="1.200" stroke-dasharray="4.500 1.200"/><path d="M11.500 4.800c5 .8 5 6.800 0 7.800" fill="none" stroke="#e8e8e8" stroke-width="1.200"/><rect x="0" y="11.400" width="2.400" height="2.400" fill="#74c2f8"/><rect x="9.200" y="11.400" width="2.400" height="2.400" fill="#74c2f8"/><rect x="8.900" y="3.600" width="2.400" height="2.400" fill="#74c2f8"/></g>
<g transform="translate(36 240)"><circle cx="7.600" cy="8.300" r="7.100" fill="none" stroke="#dcdcdc" stroke-width="1.200"/><path d="M5.200 8.300h4.800M7.600 5.900v4.800" stroke="#74c2f8" stroke-width="1.100"/></g>
<g transform="translate(36 262)"><path d="M8.100 2.500l6.800 4.900-2.500 7.300H3.800L1.300 7.400z" fill="none" stroke="#dcdcdc" stroke-width="1.200"/><rect x="7.100" y="8" width="2" height="2" fill="#74c2f8"/><rect x="11.200" y="13.600" width="2" height="2" fill="#74c2f8"/></g>
<g transform="translate(36 284)"><path d="M.5 14l2.500 2.300h6.500l3-2.300v-1.500z" fill="#f0f0f0"/><path d="M.5 2.700l3-2h9v11l-3 2.300h-9z" fill="#5aa4e6"/><path d="M.5 2.700h9v11.300h-9z" fill="#8cccf8"/><path d="M.5 2.700l3-2h9l-3 2z" fill="#b8e0fc"/><path d="M14.400 13.500V3" stroke="#fff" stroke-width="1.300"/><path d="M12.500 4.500l1.900-3.500 1.900 3.500z" fill="#fff"/></g>
<g transform="translate(36 306)"><path d="M.3 7c4-3.500 11.500-3.500 15.500 0v5l-3.300 2.500c-3-2.500-6-2.500-9 0L.3 12z" fill="#62aeec"/><path d="M.3 7c4-3.500 11.500-3.500 15.500 0l-3.300 2.500c-3-2.300-6-2.300-9 0z" fill="#9cd4fa"/><path d="M12.500 9.500l3.300-2.500v5l-3.300 2.500z" fill="#ececec"/><path d="M.8 4.800C4.500 1.200 11.500 1.200 15.200 4.800" fill="none" stroke="#f4f4f4" stroke-width="1.300"/></g>
<g transform="translate(36 328)"><path d="M.2 5l5-4h6v3h4.500v7l-3 3H.2z" fill="#62aeec"/><path d="M.2 5l5-4h6l-2 2.500 6.500.5-3 3H.2z" fill="#9cd4fa"/><rect x="4.800" y="9.200" width="7.300" height="7.200" fill="#d8d8d8" stroke="#a8a8a8" stroke-width=".6"/></g>
<g transform="translate(36 350)"><path d="M.2 1h15.800v6.500l-4.500 6h-7l-4.300-6z" fill="#62aeec"/><path d="M2.500 1h11.200L8.100 8.500z" fill="#a8dafc"/><circle cx="8.100" cy="12.500" r="4" fill="#d4d4d4" stroke="#a0a0a0" stroke-width=".5"/></g>
<g transform="translate(36 372)"><path d="M.2 7.200l4.600-2.400H16l-7.600 4z" fill="#cfcfcf"/><path d="M.2 7.200l8.200 1.600v3.600L.2 11.500z" fill="#b4b4b4"/><path d="M8.400 8.800L16 4.800v3.600l-7.600 4z" fill="#9a9a9a"/></g>
<g transform="translate(36 394)"><path d="M.2 9.500l2.500-2h6v7l-2.500 2h-6z" fill="#74c0f6"/><path d="M.2 9.500h6v7h-6z" fill="#8cccf8"/><path d="M5.400 4.500l2.500-2h8v7l-2.500 2.300h-8z" fill="#c4c4c4"/><path d="M5.400 4.500h8v7.300h-8z" fill="#dedede"/><path d="M5.400 4.500l2.500-2h8l-2.500 2z" fill="#ececec"/></g>
<g transform="translate(36 416)"><path d="M.2 9l3-2.500H5.500V4l3-2.500h7.500v7.500l-3 2.500h-2.500v2.500l-3 2.500H.2z" fill="#6cb8f2"/><path d="M.2 9h7.300v7.500H.2zM5.500 4h7.500v7h-5.500V9H5.500z" fill="#8cccf8"/><path d="M5.500 4l3-2.500h7.500L13 4z" fill="#b8e0fc"/></g>
<g transform="translate(36 438)"><path d="M.2 9l2.500-2h6v7.500l-2.500 2h-6z" fill="#c0c0c0"/><path d="M.2 9h6v7.500h-6z" fill="#dcdcdc"/><path d="M5.400 4.500l2.500-2h8v7l-2.500 2.300h-8z" fill="#c4c4c4"/><path d="M5.400 4.500h8v7.300h-8z" fill="#dedede"/><path d="M5.400 4.500l2.500-2h8l-2.500 2z" fill="#ececec"/><rect x="5.400" y="7.300" width="4" height="4" fill="#74c0f6"/></g>
<g transform="translate(36 460)"><g stroke="#5b9cf6" fill="none"><path d="M4.500 1l4.200 9M.5 5.500l10.500 3.200" stroke-width="1.500"/><circle cx="13.400" cy="8.600" r="2" stroke-width="1.200"/><circle cx="8" cy="14" r="2" stroke-width="1.200"/></g></g>
<g transform="translate(36 482)"><circle cx="6" cy="11.800" r="4.200" fill="#f01020"/><circle cx="4.800" cy="10.400" r="1.200" fill="#ff7080"/><path d="M6.500 7.500c.5-2.500 2-3 3.500-3" fill="none" stroke="#aaa" stroke-width="1.100"/><path d="M10.800 1l.8 1.800 1.900-.6-.9 1.700 1.600 1.100-1.900.3.100 2-1.400-1.400-1.500 1.200.4-1.900-1.800-.7 1.800-.8z" fill="#f08030"/></g>
<g transform="translate(36 504)"><rect x=".6" y="5.400" width="11" height="10.600" fill="#fff" stroke="#000" stroke-width="1.100"/><rect x="6.400" y="2.300" width="9.200" height="7.800" fill="none" stroke="#e02010" stroke-width="1.100" stroke-dasharray="2.600 1.400"/></g>
<g transform="translate(36 526)"><path d="M4 7.200h7" stroke="#f0f0f0" stroke-width="1.300"/><path d="M10.500 5l3.200 2.200-3.200 2.200z" fill="#f0f0f0"/><path d="M14.700 3v11.800" stroke="#f0f0f0" stroke-width="1.300"/><path d="M0 11.400h3.500" stroke="#f0f0f0" stroke-width="1.200"/><path d="M4.500 11.400h9" stroke="#50a8f0" stroke-width="1.200" stroke-dasharray="2 1.200"/></g>
<g transform="translate(36 548)"><path d="M9.800 .6L4.400 16.500" stroke="#2890f0" stroke-width="1.400"/><path d="M0 8.800h4.800" stroke="#a0a0a0" stroke-width="1.600"/><path d="M8 8.800h8" stroke="#2890f0" stroke-width="1.300" stroke-dasharray="2 1.400"/></g>
<g transform="translate(36 570)"><rect x=".2" y="8.200" width="2.400" height="2.400" fill="#222" stroke="#f0f0f0" stroke-width="1"/><path d="M2.800 9.400H11" stroke="#f0f0f0" stroke-width="1.200"/><rect x="11.400" y="7.200" width="4.400" height="4.400" fill="#1c2c50" stroke="#f2b88a" stroke-width="1.200"/></g>
<g transform="translate(36 592)"><rect x="0" y="3.800" width="16" height="11.200" fill="#d0d0d0"/><rect x="4.200" y="7.300" width="11.800" height="6.800" fill="#000"/><rect x="0" y="3.800" width="16" height="3.500" fill="#f4f4f4"/><rect x="1.800" y="4.800" width="2.600" height="1.500" fill="#555"/><rect x="7" y="4.800" width="2.600" height="1.500" fill="#555"/><rect x="12" y="4.800" width="2.600" height="1.500" fill="#555"/><rect x="0" y="7.300" width="4.200" height="6.800" fill="#8a8a8a"/><rect x="0" y="14.200" width="16" height="1" fill="#f0f0f0"/></g>
<g transform="translate(64 218)"><path d="M.8 10.500v4.500h4.500" stroke="#e82010" stroke-width="1.400" fill="none"/><rect x="2.400" y="1.700" width="12" height="12.200" fill="none" stroke="#14a4dc" stroke-width="1.700"/><path d="M8.400 1.700v12.200M2.400 7.800h12" stroke="#14a4dc" stroke-width="1.500"/></g>
<g transform="translate(64 240)"><rect x="3" y="0.9" width="9" height="7.800" fill="#000"/><rect x="4.900" y="2.800" width="5.200" height="4" fill="#f00000"/><path d="M7.400 9.800l3.800 3.600H8.800v3H6v-3H3.600z" fill="#000"/></g>
<g transform="translate(64 262)"><rect x="8" y="3.800" width="8" height="8.800" fill="#000"/><rect x="9.900" y="5.700" width="4.200" height="5" fill="#f00000"/><path d="M7.200 8.200L3.400 12V9.600H0V6.800h3.400V4.400z" fill="#000"/></g>
<g transform="translate(64 284)"><rect x="0" y="3.800" width="8" height="8.800" fill="#000"/><rect x="1.900" y="5.700" width="4.200" height="5" fill="#f00000"/><path d="M8.800 8.200l3.800 3.800V9.600H16V6.800h-3.400V4.400z" fill="#000"/></g>
<g transform="translate(64 306)"><rect x="3" y="8.400" width="9" height="8" fill="#000"/><rect x="4.900" y="10.300" width="5.200" height="4.200" fill="#f00000"/><path d="M7.500 7.400L3.700 3.800h2.400V.8h2.800v3h2.400z" fill="#000"/></g>
<g transform="translate(64 328)"><path d="M4.600 4.200l1.800-1.800h7.300v7.400l-1.800 1.800H4.600z" fill="#fff" stroke="#000" stroke-width="1"/><rect x="4.600" y="4.200" width="7.300" height="7.400" fill="#1010f0"/><path d="M3.600 12.400l1.200-1" stroke="#000" stroke-width="1"/><rect x="0" y="12" width="4" height="4" fill="#000"/><rect x="1" y="13" width="2" height="2" fill="#f00000"/></g>
<g transform="translate(64 350)"><path d="M.6 6.800l4.600-5.600 2.800 1.500v7.600l-4.800 4.400-2.600-1z" fill="#fff" stroke="#000" stroke-width="1.100"/><path d="M3.200 6.800L8 2.700v7.600l-4.800 4.400z" fill="#1010f0"/><rect x="9" y="10.200" width="6" height="5.400" fill="#000"/><rect x="10.800" y="11.800" width="2.400" height="2.200" fill="#f00000"/></g>
<g transform="translate(64 372)"><rect x=".2" y="1" width="4.800" height="4.600" fill="#000"/><rect x="1.200" y="2" width="2.800" height="2.600" fill="#f00000"/><path d="M6.600 8l4.600-5.600 3 1.500v7.400l-5 4.400-2.600-1z" fill="#fff" stroke="#000" stroke-width="1.100"/><path d="M9.200 8l5-4.100v7.400l-5 4.400z" fill="#1010f0"/></g>
<g transform="translate(64 394)"><rect x="11.200" y="1" width="4.800" height="4.600" fill="#000"/><rect x="12.200" y="2" width="2.800" height="2.600" fill="#f00000"/><path d="M.6 4.200l2.600-1.700 5.800 7v4.800l-2.600 2-5.800-4z" fill="#fff" stroke="#000" stroke-width="1.100"/><path d="M1 6.500l5.300 5.400v3.600L1 11.800z" fill="#1010f0"/><path d="M.6 13l0 3.300h4.200z" fill="#fff"/></g>
<g transform="translate(64 416)"><rect x=".6" y="1.600" width="13" height="12.600" fill="none" stroke="#d0d0d0" stroke-width="1.100"/><circle cx="11" cy="12" r="2.300" fill="#3b4453" stroke="#e8e8e8" stroke-width="1.100"/><path d="M12.800 13.800l3 3" stroke="#e8c090" stroke-width="1.200"/></g>
<g transform="translate(64 438)"><path d="M.6 .6v16M15.600 .6v16M.6 3h15" stroke="#dcdcdc" stroke-width="1.100" fill="none"/><path d="M2 1.800L.8 3 2 4.200M14.200 1.800L15.400 3l-1.200 1.200" stroke="#dcdcdc" stroke-width="1" fill="none"/><path d="M9.500 7.500l-4.500 4.500h3l-1.800 3.500 5-5H8.200z" fill="#f2c040"/></g>
<g transform="translate(64 460)"><g stroke="#1f5a2c" fill="none" stroke-width="1.300"><path d="M.4 7.200h15.400M.8 5.600v8M15.400 5.600v8"/></g><rect x="5" y="4.300" width="6" height="2" fill="#1f5a2c"/></g>
<g transform="translate(64 482)"><g fill="none" stroke="#f0f0f0" stroke-width="1.100"><ellipse cx="7.800" cy="8.200" rx="3.600" ry="7.200"/><path d="M4.600 5C-1 6.500-.5 10.500 5 12M11 5c5.500 1.500 5.500 5.500 0 7"/></g><path d="M10.600 3.400l2.400.4-1.200 2z" fill="#f0f0f0"/><path d="M11 12.500l2.200-1.200.2 2.400z" fill="#f0f0f0"/><path d="M6.200 8.200h3.200M7.800 6.600v3.200" stroke="#50a8f0" stroke-width="1.100"/></g>
<g transform="translate(64 504)"><ellipse cx="8" cy="15.200" rx="6.500" ry=".8" fill="#2c333f"/><circle cx="8" cy="6.800" r="6" fill="url(#gsph)"/></g>
<g transform="translate(64 526)"><g fill="none" stroke="#5eb0f2" stroke-width="1.500"><rect x=".8" y="5" width="10.800" height="11"/><path d="M.8 5l4.200-4.200h10.500v11l-3.900 4.200M11.600 5l3.900-4.200"/></g><path d="M5.400 11l-3 3.300M5.400 11l8-4.500M5.400 11V8.500" stroke="#e8e8e8" stroke-width="1"/></g>
<g transform="translate(64 548)"><path d="M0 5.800h4.500l1.200-2h5l1.200 2H16v8.600H0z" fill="#000"/><circle cx="7.700" cy="9.200" r="2.800" fill="#f4f4f4"/><circle cx="7.900" cy="9.300" r="1.700" fill="#000080"/><path d="M5.200 4.500l1.500-1.800" stroke="#20c0d0" stroke-width="1"/></g>
<g transform="translate(64 570)"><path d="M.2 9l7.800-3.500 7.800 3.500-7.800 3.500z" fill="#ececec"/><path d="M.2 9l7.800 3.500v4L.2 13z" fill="#c4c4c4"/><path d="M8 12.500L15.800 9v4L8 16.500z" fill="#a8a8a8"/><path d="M4.500 2.500h7v6c-1.500 1.600-5.500 1.600-7 0z" fill="#5aa4e6"/><ellipse cx="8" cy="2.500" rx="3.500" ry="1.700" fill="#9cd4fa"/></g>
<g transform="translate(64 592)"><rect x=".7" y="1" width="14" height="14.200" fill="none" stroke="#dcdcdc" stroke-width="1.200"/><circle cx="6" cy="6.600" r="3.400" fill="#9098a4" stroke="#c8c8c8" stroke-width=".8"/><rect x="7" y="7.800" width="5.600" height="3.400" fill="#3b4453" stroke="#50a8f0" stroke-width="1.300"/><path d="M9.500 14.400h4.300c2.200 0 2.200-3.200 0-3.200" fill="none" stroke="#74c2f8" stroke-width="1.300"/><path d="M10.500 12.400l-2.700 2 2.700 2z" fill="#74c2f8"/></g>
<g transform="translate(92 218)"><g fill="#14a4dc"><rect x="1" y="1" width="1" height="1"/><rect x="4" y="1" width="1" height="1"/><rect x="7" y="1" width="1" height="1"/><rect x="10" y="1" width="1" height="1"/><rect x="13" y="1" width="1" height="1"/><rect x="1" y="4" width="1" height="1"/><rect x="4" y="4" width="1" height="1"/><rect x="7" y="4" width="1" height="1"/><rect x="10" y="4" width="1" height="1"/><rect x="13" y="4" width="1" height="1"/></g><text x="-.3" y="15.400" font-family="Liberation Sans" font-weight="bold" font-size="9.800" fill="#14a4dc" textLength="16.500" lengthAdjust="spacingAndGlyphs" stroke="#14a4dc" stroke-width=".5">100</text></g>
<g transform="translate(92 240)"><g fill="none" stroke="#14a4dc" stroke-width="1"><path d="M6.200 2.500L2 14.800" stroke-dasharray="1.800 1.200"/><path d="M6 3c1 4.500 3 7.500 4.500 9.500M1.800 15.200h12.500"/></g><circle cx="6.200" cy="1.700" r="1.200" fill="#f01010"/><circle cx="14.600" cy="15.200" r="1.200" fill="#f01010"/></g>
<g transform="translate(92 262)"><path d="M4.200 12l7.400-6.800" stroke="#dcdcdc" stroke-width="1.100"/><rect x="0.3" y="11.700" width="4.200" height="4.200" fill="none" stroke="#f2b88a" stroke-width="1.100"/><rect x="11.500" y="1.300" width="4.200" height="4.200" fill="none" stroke="#f2b88a" stroke-width="1.100"/></g>
<g transform="translate(92 284)"><path d="M.4 16.400L5.700 11M9.200 7.400L14.800 1.800" stroke="#dcdcdc" stroke-width="1.100"/><rect x="5.400" y="7.100" width="4.200" height="4.200" fill="none" stroke="#f2b88a" stroke-width="1.100"/></g>
<g transform="translate(92 306)"><path d="M.2 1.100l5.400 5.400M9.500 10.400l5.300 5.400M14.800 1.100L9.500 6.500M5.600 10.400L.2 15.800" stroke="#dcdcdc" stroke-width="1.100"/><rect x="5.400" y="6.300" width="4.200" height="4.200" fill="none" stroke="#f2b88a" stroke-width="1.100"/></g>
<g transform="translate(92 328)"><circle cx="7.800" cy="8.700" r="7.600" fill="none" stroke="#dcdcdc" stroke-width="1.100"/><rect x="6" y="6.900" width="3.600" height="3.600" fill="none" stroke="#f2b88a" stroke-width="1.100"/></g>
<g transform="translate(92 350)"><path d="M7.500 1.600v8.600M.2 12.400h5.100M9.700 12.400h5.100" stroke="#dcdcdc" stroke-width="1.100"/><rect x="5.400" y="10.300" width="4.200" height="4.200" fill="none" stroke="#f2b88a" stroke-width="1.100"/></g>
<g transform="translate(92 372)"><circle cx="7.800" cy="8.400" r="6" fill="none" stroke="#a0a8b4" stroke-width="1.200"/><rect x="6" y="0.6" width="3.600" height="3.600" fill="none" stroke="#f2b88a" stroke-width="1.100"/><rect x="6" y="12.600" width="3.600" height="3.600" fill="none" stroke="#f2b88a" stroke-width="1.100"/><rect x="0" y="6.600" width="3.600" height="3.600" fill="none" stroke="#f2b88a" stroke-width="1.100"/><rect x="12" y="6.600" width="3.600" height="3.600" fill="none" stroke="#f2b88a" stroke-width="1.100"/></g>
<g transform="translate(92 394)"><rect x="6.300" y="7.200" width="4" height="4" fill="none" stroke="#f2b88a" stroke-width="1.100"/></g>
<g transform="translate(92 416)"><path d="M.6 1.600v14.300M15.600 1.600v14.300" stroke="#dcdcdc" stroke-width="1.200"/><path d="M2 6.300h12" stroke="#5eb0f2" stroke-width="1"/><path d="M1.300 6.300l2.600-1.500v3zM14.900 6.300l-2.600-1.500v3z" fill="#5eb0f2"/></g>
<g transform="translate(92 438)"><path d="M1.800 4.200v4.600M13.800 4.200v4.600M1.800 6.400h12" stroke="#dcdcdc" stroke-width="1.100"/><path d="M2.400 6.400l2-1.300v2.600zM13.200 6.400l-2-1.300v2.600z" fill="#dcdcdc"/><rect x="1" y="10.200" width="13.400" height="3.800" fill="#f2c860"/><path d="M3 10.200v2M5 10.200v1.400M7 10.200v2M9 10.200v1.400M11 10.200v2M13 10.200v1.400" stroke="#8a6a20" stroke-width=".7"/></g>
<g transform="translate(92 460)"><rect x="1.400" y="4.200" width="14.400" height="10.400" fill="#6a6a6a"/><rect x=".4" y="3.200" width="14.200" height="10.200" fill="#fff"/><rect x="1.500" y="4.400" width="10.400" height="7.200" fill="none" stroke="#f01010" stroke-width="1.400"/></g>
<g transform="translate(92 482)"><path d="M2.800 6.200l6.600-3.400 6.600 3.400-6.600 3.600z" fill="#28a4f4"/><path d="M2.800 6.200l6.600 3.600v6.800l-6.600-3.800z" fill="#1c8ce4"/><path d="M9.400 9.800L16 6.200v6.600l-6.600 3.800z" fill="#3c50ec"/><rect x="1" y="5.400" width="2.600" height="2.600" fill="#c01010" stroke="#f04040" stroke-width=".6"/></g>
<g transform="translate(92 504)"><rect x=".4" y="1.200" width="15.400" height="14.800" fill="#c8c8c8"/><rect x=".4" y="1.800" width="15.400" height="13" fill="#000"/><path d="M.4 9h15.400M8 1.800v13" stroke="#e8e8e8" stroke-width="1"/><path d="M2 11.500v2.500h2.500" stroke="#e0e0e0" stroke-width=".9" fill="none"/></g>
<g transform="translate(92 526)"><path d="M6.500 3h6.500l2.800 2.800v10.600H4z" fill="#b8b8b8"/><path d="M13 3v2.800h2.800z" fill="#e8e8e8"/><rect x="3.200" y="9.800" width="12.600" height="5" fill="#8c8c8c"/><text x="3.500" y="14.200" font-family="Liberation Sans" font-weight="bold" font-size="5.200" fill="#fff" textLength="12" lengthAdjust="spacingAndGlyphs">WMF</text><path d="M0 4h6" stroke="#50a8f0" stroke-width="1.800"/><path d="M5.200 1l4 3-4 3z" fill="#50a8f0"/></g>
<g transform="translate(92 548)"><rect x="1.300" y="2" width="13.400" height="4.500" fill="#000"/><path d="M2.500 3h4M2.500 4.800h2.500M8 3h5.500M9 4.800h3" stroke="#e8e8e8" stroke-width=".9"/><rect x="2.800" y="6.400" width="11.900" height="9.800" rx="1.200" fill="#f08c20"/><rect x="2.800" y="6.400" width="11.900" height="2.400" fill="#f8d0a0"/><circle cx="9.800" cy="12.400" r="2.800" fill="#f4f4f4"/><circle cx="9.800" cy="12.400" r="1.300" fill="#b0b0b0"/></g>
<g transform="translate(92 570)"><rect x=".6" y="1.500" width="15" height="14.800" fill="#2a2f38"/><rect x=".6" y="1.500" width="14.200" height="14" fill="#e8e8e8"/><rect x="2.200" y="3" width="11" height="11" fill="url(#gdoc)" stroke="#2a50a0" stroke-width="1"/><path d="M9.500 3v3h3.700" stroke="#2a50a0" stroke-width=".8" fill="#fff"/><path d="M11.500 8h1.500M11.500 10h1.500M11.500 12h1.500" stroke="#fff" stroke-width=".8"/></g>
<g transform="translate(92 592)"><rect x="4.600" y=".8" width="11.200" height="7.600" fill="#7a1c1c"/><rect x="7.500" y="3.400" width="8" height="4.600" fill="#fff"/><rect x=".4" y="9.200" width="11.400" height="7.200" fill="#9a9a9a"/><rect x=".4" y="9.200" width="2" height="7.200" fill="#1c6a2c"/><rect x="3.400" y="11.400" width="7" height="4.200" fill="#8a8a8a" stroke="#b8b8b8" stroke-width=".6"/><path d="M12.500 9.500h2v2M14.500 9.500l-2.500 2.500" stroke="#e8e8e8" stroke-width="1" fill="none"/><path d="M4.600 3.500h2.500" stroke="#c8c8c8" stroke-width="1"/></g>
<circle cx="1068" cy="264" r="37.200" fill="none" stroke="#464646" stroke-width="9.200"/>
<rect x="1050" y="246" width="36" height="36" fill="#dedede" stroke="#8a8a8a" stroke-width=".6"/><rect x="1056.700" y="253" width="22.300" height="22" fill="#b6bed2"/>
<text class="tx" x="1057.32" y="267.38" font-size="9" fill="#30343c" textLength="21.4" lengthAdjust="spacingAndGlyphs">평면도</text>
<g fill="#f4f4f4"><path d="M1063.500 236.500h9l-4.500 4.500z"/><path d="M1063.500 291.500h9l-4.500-4.500z"/><path d="M1040.800 259.500v9l4.500-4.500z"/><path d="M1095.200 259.500v9l-4.500-4.500z"/></g>
<text class="tx" x="1062.02" y="230.38" font-size="13" fill="#b0b0b0">북</text>
<text class="tx" x="1062.02" y="308.38" font-size="13" fill="#b0b0b0">남</text>
<g transform="rotate(90 1106 264)">
<text class="tx" x="1100.02" y="268.88" font-size="13" fill="#b0b0b0">동</text>
</g>
<g transform="rotate(0 1029.5 264)">
<text class="tx" x="1023.59" y="269.06" font-size="13.5" fill="#b0b0b0">서</text>
</g>
<path d="M1099 215.300c4-.8 8 .3 11.500 3" fill="none" stroke="#9ccaf4" stroke-width="2.800"/><path d="M1095.300 215.800l6.200-5v8.800z" fill="#9ccaf4"/>
<path d="M1113.800 223c2.200 2.800 3.100 5.800 2.900 9.500" fill="none" stroke="#6e6e6e" stroke-width="2.800"/><path d="M1112.500 231.800h8.300l-4.300 5.700z" fill="#6e6e6e"/>
<path d="M1019.500 219.500l4.500-5.500 4.500 5.500zM1022 219.500h4v5h-4z" fill="#6a6a6a"/>
<path d="M1110 304.500h8.500M1110.200 306h8l-4 4.500z" fill="#808080" stroke="#808080" stroke-width="1"/>
<rect x="1044.500" y="325" width="47" height="16.500" rx="3.500" fill="#babace" stroke="#9a9ab0" stroke-width="1"/><path d="M1078.500 330.500h8l-4 4.800z" fill="none" stroke="#ececf4" stroke-width="1"/>
<path d="M94.500 201.600l9-22.600h96.500l-9 22.600z" fill="#3b4453"/>
<g fill="#e8e8e8"><rect x="20" y="184.500" width="16" height="2"/><rect x="20" y="189.700" width="16" height="2"/><rect x="20" y="194.900" width="16" height="2"/></g>
<g stroke="#4a5361" stroke-width="1.200"><path d="M47 199l6.500-18M234 199l6.500-18"/></g>
<text class="tx" x="62.7" y="194.88" font-size="13" fill="#e0e0e0" textLength="23.9">시작</text>
<path d="M179.500 186.500l8 8M187.500 186.500l-8 8" stroke="#a8acb4" stroke-width="1.800"/>
<path d="M209.500 190h13.500M216.200 183.300v13.500" stroke="#f0f0f0" stroke-width="1.800"/>
<text class="tx" x="120.6" y="226" font-size="12.8" fill="#f0f0f0" textLength="159.2">[−][평면도][2D 와이어프레임]</text>
<rect x="1134" y="445" width="1.600" height="17" fill="#8a8a8a"/><rect x="613.500" y="708" width="16" height="1.600" fill="#8a8a8a"/>
<g fill="#f0f0f0"><rect x="8" y="726" width="2" height="2"/><rect x="8" y="729" width="2" height="2"/><rect x="11" y="726" width="2" height="2"/><rect x="11" y="729" width="2" height="2"/><rect x="14" y="726" width="2" height="2"/><rect x="14" y="729" width="2" height="2"/><rect x="17" y="726" width="2" height="2"/><rect x="17" y="729" width="2" height="2"/><rect x="20" y="726" width="2" height="2"/><rect x="20" y="729" width="2" height="2"/><rect x="23" y="726" width="2" height="2"/><rect x="23" y="729" width="2" height="2"/></g>
<path d="M11.800 740.300l8.400 8.400M20.200 740.300l-8.400 8.400" stroke="#f0f0f0" stroke-width="2.100"/>
<g><path d="M9.200 775.200l8.500-8.500" stroke="#dcdcdc" stroke-width="2.800" stroke-linecap="round"/><path d="M15.300 768.800c-1.800-2.400-1-6 2-7.600l1.200.4-1.800 3.400 2.400 1.900 3-2.400.7.900c-.6 3.600-4.300 5.200-7.500 3.400z" fill="#dcdcdc"/></g>
<text class="tx" x="31.9" y="737.67" font-size="13" fill="#000" textLength="30.6">명령:</text>
<text class="tx" x="31.9" y="752.27" font-size="13" fill="#000" textLength="78">명령: *취소*</text>
<text class="tx" x="66.3" y="772.48" font-size="13" font-style="italic" fill="#909090" textLength="58.5">명령 입력</text>
<g><rect x="33.500" y="763.500" width="15" height="11.500" fill="#f4f4f4" stroke="#707070" stroke-width="1"/><rect x="33.500" y="763.500" width="15" height="2.500" fill="#707070"/><rect x="35" y="767" width="12" height="7" fill="#e2e2e2"/><path d="M36 768.500l2.500 1.800-2.500 1.800M39.500 772.500h3" stroke="#333" stroke-width="1" fill="none"/></g>
<path d="M51.5 766.5h7l-3.500 4z" fill="#707070"/>
<path d="M45.500 807.500l10-24h48l-10 24z" fill="#3b4453"/>
<g fill="#e8e8e8"><rect x="20" y="789.300" width="16" height="2"/><rect x="20" y="794.700" width="16" height="2"/><rect x="20" y="800.100" width="16" height="2"/></g>
<text class="tx" x="62.8" y="800.88" font-size="13" fill="#ffffff" textLength="23.9">모형</text>
<text class="tx" x="110.9" y="800.88" font-size="13" fill="#e0e0e0" textLength="31.1">배치1</text>
<text class="tx" x="165.8" y="800.88" font-size="13" fill="#e0e0e0" textLength="31.1">배치2</text>
<g stroke="#4a5361" stroke-width="1.200"><path d="M150.200 803l6-15M205 803l6-15M247 803l6-15"/></g>
<path d="M221.600 795.700h14M228.600 788.700v14" stroke="#f0f0f0" stroke-width="2"/>
<rect x="542" y="786.8" width="27" height="22.6" fill="#3b4453"/>
<rect x="573" y="786.8" width="22" height="22.6" fill="#608fc0"/>
<rect x="597" y="786.8" width="22" height="22.6" fill="#608fc0"/>
<rect x="619" y="786.8" width="17" height="22.6" fill="#3b4453"/>
<rect x="640" y="786.8" width="22" height="22.6" fill="#608fc0"/>
<rect x="662" y="786.8" width="81" height="22.6" fill="#3b4453"/>
<rect x="745" y="786.8" width="22" height="22.6" fill="#608fc0"/>
<rect x="767" y="786.8" width="41" height="22.6" fill="#3b4453"/>
<rect x="812" y="786.8" width="22" height="22.6" fill="#608fc0"/>
<rect x="834" y="786.8" width="83" height="22.6" fill="#3b4453"/>
<rect x="920" y="786.8" width="83" height="22.6" fill="#3b4453"/>
<rect x="1004.5" y="786.8" width="24" height="22.6" fill="#3b4453"/>
<rect x="1031" y="786.8" width="24.5" height="22.6" fill="#3b4453"/>
<rect x="1058" y="786.8" width="30.5" height="22.6" fill="#3b4453"/>
<rect x="1091" y="786.8" width="24.5" height="22.6" fill="#3b4453"/>
<rect x="1117" y="786.8" width="24" height="22.6" fill="#3b4453"/>
<text class="tx" x="543.54" y="801.88" font-size="13" fill="#ffffff" textLength="23.9">모형</text>
<path d="M576.300 794.400h15M576.300 798.300h15M576.300 802.300h15M579.800 790.200v15.300M583.700 790.200v15.300M587.700 790.200v15.300" stroke="#fff" stroke-width="1.200" fill="none"/>
<g fill="#fff"><rect x="601" y="792" width="2" height="2"/><rect x="601" y="796.85" width="2" height="2"/><rect x="601" y="801.7" width="2" height="2"/><rect x="606.5" y="792" width="2" height="2"/><rect x="606.5" y="796.85" width="2" height="2"/><rect x="606.5" y="801.7" width="2" height="2"/><rect x="612" y="792" width="2" height="2"/><rect x="612" y="796.85" width="2" height="2"/><rect x="612" y="801.7" width="2" height="2"/></g>
<path d="M625.1 796h7l-3.500 4z" fill="#e8e8e8"/>
<path d="M644.500 789.500v15.500h15M644.500 798.500h5.500v6" stroke="#fff" stroke-width="1.400" fill="none"/>
<g fill="none" stroke="#e8e8e8" stroke-width="1.300"><circle cx="674" cy="799" r="6"/><path d="M674 799l9-9M674 799h10"/></g>
<path d="M691.9 796h7l-3.500 4z" fill="#e8e8e8"/>
<path d="M714.500 790v15.500" stroke="#50e070" stroke-width="1.100"/><path d="M708 791l13 13.200" stroke="#f06868" stroke-width="1.100"/><rect x="713.200" y="796.300" width="2.600" height="2.600" fill="#222" stroke="#fff" stroke-width=".8"/>
<path d="M731.1 796h7l-3.500 4z" fill="#e8e8e8"/>
<path d="M748.500 804.500h15M748.500 804.500l14-13" stroke="#fff" stroke-width="1.400" fill="none"/><circle cx="755.500" cy="798" r="1.600" fill="#222" stroke="#fff" stroke-width=".8"/>
<rect x="774.500" y="792.300" width="13" height="13" fill="none" stroke="#f0f0f0" stroke-width="1.200"/><rect x="772.200" y="790.600" width="4.500" height="4.300" fill="#3b4453" stroke="#f2a868" stroke-width="1.100"/>
<path d="M796.8 796h7l-3.500 4z" fill="#e8e8e8"/>
<path d="M821.6 790l2 7.500 4.800 8.300-4.600-3.300-2.200 3.600-2.200-3.600-4.600 3.300 4.800-8.300z" fill="#fff"/><circle cx="828.300" cy="794" r="2.100" fill="none" stroke="#fff" stroke-width="1.100"/>
<path d="M846 790l2 7.500 4.800 8.300-4.600-3.300-2.200 3.600-2.200-3.600-4.600 3.300 4.800-8.300z" fill="#e0e0e0"/><path d="M852 788l1 2.500 2.500.5-2 1.500.5 2.500-2-1.500-2 1.500.5-2.500-2-1.500 2.500-.5z" fill="#e0e0e0"/>
<path d="M871 790l2 7.500 4.800 8.300-4.600-3.300-2.200 3.600-2.200-3.600-4.600 3.300 4.800-8.300z" fill="#e0e0e0"/>
<path d="M905.9 796h7l-3.500 4z" fill="#e8e8e8"/>
<g transform="translate(931.400 797.600) scale(.75)"><path d="M-1.500-8h3l.6 2.200 1.600.7 2-1.100 2.100 2.100-1.100 2 .7 1.600 2.200.6v3l-2.200.6-.7 1.600 1.100 2-2.100 2.100-2-1.100-1.600.7-.6 2.200h-3l-.6-2.200-1.600-.7-2 1.100-2.100-2.100 1.100-2-.7-1.600-2.200-.6v-3l2.200-.6.7-1.600-1.100-2 2.100-2.100 2 1.100 1.600-.7z" fill="#e0e0e0"/><circle r="3.500" fill="#3b4453"/></g>
<path d="M991.5 796h7l-3.500 4z" fill="#e8e8e8"/>
<path d="M1008 798h16M1016 790v16" stroke="#ececec" stroke-width="1.800"/>
<g fill="none" stroke="#e0e0e0" stroke-width="1.200"><rect x="1035.500" y="790.700" width="6" height="5.600"/><circle cx="1047.600" cy="796.500" r="3"/><path d="M1038.200 805.600l3.400-5.500 3.400 5.500z"/></g>
<rect x="1065" y="790.100" width="15" height="11.800" fill="#cfcfcf"/><path d="M1066.500 798c1.800-5 3.500-5 5.300-.8s3.500 4.800 6.200-3.200" fill="none" stroke="#555" stroke-width="1"/><circle cx="1070" cy="792.800" r="1" fill="#40a0f0"/><path d="M1072.200 806l4.400-7.800 4.400 7.800z" fill="#f2a868"/><path d="M1076.600 801v3" stroke="#fff" stroke-width="1"/>
<g transform="translate(0 1.200)"><rect x="1095.500" y="791" width="15" height="11.500" fill="none" stroke="#e8e8e8" stroke-width="1.100"/><path d="M1103 796l4-2.500M1107.300 793.300l-3 .2M1107.300 793.300l-.6 3M1102.500 797.500l-4.500 2.700M1097.800 800.400l3-.2M1097.800 800.400l.6-3" stroke="#e8e8e8" stroke-width="1" fill="none"/></g>
<g fill="#f0f0f0"><rect x="1121" y="791" width="16" height="2"/><rect x="1121" y="797" width="16" height="2"/><rect x="1121" y="803" width="16" height="2"/></g></svg>
<span class="k" style="left:270.5px;top:8.7px;font-size:13px">공유</span>
<span class="t" style="left:361px;top:8.8px;font-size:13px;color:#f0f0f0;letter-spacing:-0.37px">Drawing1.dwg</span>
<span class="k" style="left:519px;top:8.98px;font-size:11.7px">키워드 또는 구절 입력</span>
<span class="k" style="left:744.5px;top:8.7px;font-size:13px">로그인</span>
<span class="t" style="left:919.3px;top:9.3px;font-size:13.5px;color:#3a3f48;font-weight:bold">?</span>
<span class="k" style="left:13.4px;top:34.2px;font-size:13px">선택도구</span>
<span class="k" style="left:75.9px;top:34.2px;font-size:13px">기초 설계</span>
<span class="k" style="left:141.6px;top:34.2px;font-size:13px">문 창문</span>
<span class="k" style="left:196px;top:34.2px;font-size:13px">시설 설계</span>
<span class="k" style="left:261.7px;top:34.2px;font-size:13px">가구</span>
<span class="k" style="left:299.7px;top:34.2px;font-size:13px">소품</span>
<span class="k" style="left:337.6px;top:34.2px;font-size:13px">사용법</span>
<span class="k" style="left:17.7px;top:58.7px;font-size:13px">신속 접근</span>
<span class="k" style="left:90.3px;top:58.7px;font-size:13px">평면도 그리기</span>
<span class="k" style="left:185.8px;top:58.7px;font-size:13px">문 창호</span>
<span class="k" style="left:313.3px;top:58.7px;font-size:13px">시설 설계</span>
<span class="k" style="left:385.6px;top:58.7px;font-size:13px">조경</span>
<span class="k" style="left:429px;top:58.7px;font-size:13px">2D 도형</span>
<span class="k" style="left:492.8px;top:58.7px;font-size:13px">3D 모델링</span>
<span class="k" style="left:569.4px;top:58.7px;font-size:13px">수정</span>
<span class="k" style="left:613px;top:58.7px;font-size:13px">화면 표현</span>
<span class="k" style="left:685px;top:58.7px;font-size:13px">도면 요소</span>
<span class="k" style="left:757px;top:58.7px;font-size:13px">출력</span>
<span class="k" style="left:245.3px;top:58.7px;font-size:13px">주택설계</span>
<span class="k" style="left:18px;top:119.2px;font-size:13px">계단</span>
<span class="k" style="left:77.4px;top:119.2px;font-size:13px">난간</span>
<span class="k" style="left:144.7px;top:119.2px;font-size:13px">벽면패널</span>
<span class="k" style="left:226.75px;top:119.2px;font-size:13px">웨인스코팅</span>
<span class="k" style="left:300.95px;top:119.2px;font-size:13px">주방 상하부장</span>
<span class="k" style="left:398px;top:119.2px;font-size:13px">주방설비</span>
<span class="k" style="left:471.25px;top:119.2px;font-size:13px">화장실</span>
<span class="k" style="left:559.3px;top:119.2px;font-size:13px">패널</span>
<span class="k" style="left:634.25px;top:119.2px;font-size:13px">트러스</span>
<span class="k" style="left:695.2px;top:119.2px;font-size:13px">지붕</span>
<span class="k" style="left:744.1px;top:119.2px;font-size:13px">주택</span>
<span class="k" style="left:11.4px;top:157.7px;font-size:13px">계단</span>
<span class="k" style="left:60.2px;top:157.7px;font-size:13px">3D 난간</span>
<span class="k" style="left:130.2px;top:157.7px;font-size:13px">벽패널_몰딩</span>
<span class="k" style="left:219.5px;top:157.7px;font-size:13px">웨인스코팅</span>
<span class="k" style="left:311.5px;top:157.7px;font-size:13px">상하부장</span>
<span class="k" style="left:391.2px;top:157.7px;font-size:13px">주방설비</span>
<span class="k" style="left:464.5px;top:157.7px;font-size:13px">화장실</span>
<span class="k" style="left:627.5px;top:157.7px;font-size:13px">트러스</span>
<span class="k" style="left:689px;top:157.7px;font-size:13px">지붕</span>
<span class="k" style="left:737.5px;top:157.7px;font-size:13px">주택</span>
<span class="k" style="left:788.1px;top:157.7px;font-size:13px">작업 도구</span>
<span class="k" style="left:868.6px;top:157.7px;font-size:13px">모델 스냅</span>
<span class="t" style="left:890.8px;top:92px;font-size:11px;color:#0cb0ec;transform:translateX(-50%);font-weight:bold;letter-spacing:-0.4px">1</span>
<span class="t" style="left:915.5px;top:92px;font-size:11px;color:#0cb0ec;transform:translateX(-50%);font-weight:bold;letter-spacing:-0.4px">25</span>
<span class="t" style="left:890.5px;top:116px;font-size:11px;color:#0cb0ec;transform:translateX(-50%);font-weight:bold;letter-spacing:-0.4px">5</span>
<span class="t" style="left:915.5px;top:116px;font-size:11px;color:#0cb0ec;transform:translateX(-50%);font-weight:bold;letter-spacing:-0.4px">50</span>
<span class="t" style="left:890px;top:140px;font-size:11px;color:#0cb0ec;transform:translateX(-50%);font-weight:bold;letter-spacing:-0.4px">10</span>
<span class="t" style="left:914px;top:140px;font-size:11px;color:#0cb0ec;transform:translateX(-50%);font-weight:bold;letter-spacing:-0.4px">100</span>
<span class="k" style="left:1055.85px;top:258.6px;font-size:9px">평면도</span>
<span class="k" style="left:1062.15px;top:217.7px;font-size:13px">북</span>
<span class="k" style="left:1062.15px;top:295.7px;font-size:13px">남</span>
<span class="k" style="left:1100.15px;top:256.2px;font-size:13px">동</span>
<span class="k" style="left:1023.72px;top:255.9px;font-size:13.5px">서</span>
<span class="t" style="left:1048.6px;top:328px;font-size:11.2px;color:#585868;letter-spacing:-0.2px">WCS</span>
<span class="k" style="left:62.7px;top:182.2px;font-size:13px">시작</span>
<span class="t" style="left:110.5px;top:184.2px;font-size:13px;color:#ffffff;font-weight:bold;letter-spacing:-0.5px">Drawing1*</span>
<span class="k" style="left:120.6px;top:213.52px;font-size:12.8px">[−][평면도][2D 와이어프레임]</span>
<span class="k" style="left:31.4px;top:725px;font-size:13px">명령:</span>
<span class="k" style="left:31.4px;top:739.6px;font-size:13px">명령: *취소*</span>
<span class="k" style="left:65.8px;top:759.8px;font-size:13px">명령 입력</span>
<span class="k" style="left:62.8px;top:788.2px;font-size:13px">모형</span>
<span class="k" style="left:110.9px;top:788.2px;font-size:13px">배치1</span>
<span class="k" style="left:165.8px;top:788.2px;font-size:13px">배치2</span>
<span class="k" style="left:543.8px;top:789.2px;font-size:13px">모형</span>
<span class="t" style="left:888px;top:791.3px;font-size:12px;color:#f0f0f0;letter-spacing:-1.1px">1:1</span>
<span class="t" style="left:949px;top:791.3px;font-size:12px;color:#f0f0f0;letter-spacing:-0.7px">CYCAD</span>
</div>
<div class="layer" id="L_popup">
<div style="left:518.5px;top:175px;width:506.5px;height:269.5px;background:#3b4453;border-right:1px solid #2a313c;border-bottom:1px solid #2a313c;"></div>
<svg class="ov" width="1147" height="817" viewBox="0 0 1147 817"><g fill="#242b35"><rect x="565" y="180" width="1" height="72"/><rect x="565" y="254" width="1" height="72"/><rect x="771" y="254" width="1" height="72"/><rect x="577" y="328" width="1" height="72"/><rect x="696" y="328" width="1" height="72"/><rect x="831" y="328" width="1" height="72"/></g>
<text class="tx" x="524" y="211.88" font-size="13" fill="#f4f4f4" textLength="35.9">벽패널</text>
<text class="tx" x="524" y="285.48" font-size="13" fill="#f4f4f4" textLength="35.9">사이딩</text>
<text class="tx" x="523.6" y="360.18" font-size="13" fill="#f4f4f4" textLength="47.8">블라인드</text>
<text class="tx" x="580.21" y="230.18" font-size="13" fill="#f4f4f4" textLength="19.2">1골</text>
<text class="tx" x="618.31" y="230.18" font-size="13" fill="#f4f4f4" textLength="19.2">2골</text>
<text class="tx" x="655.61" y="230.18" font-size="13" fill="#f4f4f4" textLength="19.2">3골</text>
<text class="tx" x="693.61" y="230.18" font-size="13" fill="#f4f4f4" textLength="19.2">4골</text>
<text class="tx" x="731.71" y="230.18" font-size="13" fill="#f4f4f4" textLength="19.2">5골</text>
<text class="tx" x="767.84" y="230.18" font-size="13" fill="#f4f4f4" textLength="23.9">평판</text>
<text class="tx" x="805.94" y="230.18" font-size="13" fill="#f4f4f4" textLength="23.9">잔골</text>
<text class="tx" x="839.76" y="230.18" font-size="13" fill="#f4f4f4" textLength="35.9">웨이브</text>
<text class="tx" x="881.76" y="230.18" font-size="13" fill="#f4f4f4" textLength="35.9">세일링</text>
<text class="tx" x="925.7" y="230.18" font-size="13" fill="#f4f4f4" textLength="30">3:7골</text>
<path d="M581.6 184.5L599.4 186.7L599.4 210L581.6 214z" fill="#ff0a0a"/><path d="M590.472 185.597L599.4 186.7L599.4 210L590.472 212.006z" fill="#e80000"/><path d="M590.472 185.597V212.006" stroke="#a00000" stroke-width="1.2"/>
<path d="M620.1 184.5L638 186.7L638 210L620.1 214z" fill="#f0f000"/><path d="M630.894 185.827L638 186.7L638 210L630.894 211.588z" fill="#d8d800"/><path d="M625.471 185.16V212.8" stroke="#909000" stroke-width="1.1"/><path d="M630.894 185.827V211.588" stroke="#909000" stroke-width="1.1"/>
<path d="M656.4 184.5L675.3 186.7L675.3 210L656.4 214z" fill="#10f0f0"/><path d="M670.966 186.196L675.3 186.7L675.3 210L670.966 210.917z" fill="#00d0d0"/><path d="M661.116 185.049V213.002" stroke="#009090" stroke-width="1.1"/><path d="M665.844 185.599V212.001" stroke="#009090" stroke-width="1.1"/><path d="M670.966 186.196V210.917" stroke="#009090" stroke-width="1.1"/>
<path d="M694.8 184.5L714 186.7L714 210L694.8 214z" fill="#d4d4d4"/><path d="M710 186.242L714 186.7L714 210L710 210.833z" fill="#b8b8b8"/><path d="M698 184.867V213.333" stroke="#808080" stroke-width="1.1"/><path d="M702 185.325V212.5" stroke="#808080" stroke-width="1.1"/><path d="M706 185.783V211.667" stroke="#808080" stroke-width="1.1"/><path d="M710 186.242V210.833" stroke="#808080" stroke-width="1.1"/>
<path d="M732.8 184.5L752 186.7L752 210L732.8 214z" fill="#f04040"/><path d="M748.8 186.333L752 186.7L752 210L748.8 210.667z" fill="#d83030"/><path d="M735.4 184.798V213.458" stroke="#a02020" stroke-width="1"/><path d="M738.8 185.188V212.75" stroke="#a02020" stroke-width="1"/><path d="M742 185.554V212.083" stroke="#a02020" stroke-width="1"/><path d="M745.4 185.944V211.375" stroke="#a02020" stroke-width="1"/><path d="M748.8 186.333V210.667" stroke="#a02020" stroke-width="1"/>
<path d="M772.1 184.5L788.3 186.7L788.3 210L772.1 214z" fill="#1010f4"/><path d="M785.75 186.354L788.3 186.7L788.3 210L785.75 210.63z" fill="#0000c8"/>
<path d="M809.8 184.5L828.3 186.7L828.3 210L809.8 214z" fill="#10e810"/><path d="M810.93 184.634V213.756" stroke="#0a800a" stroke-width="0.8"/><path d="M812.86 184.864V213.338" stroke="#0a800a" stroke-width="0.8"/><path d="M814.79 185.093V212.921" stroke="#0a800a" stroke-width="0.8"/><path d="M816.72 185.323V212.504" stroke="#0a800a" stroke-width="0.8"/><path d="M818.65 185.552V212.086" stroke="#0a800a" stroke-width="0.8"/><path d="M820.58 185.782V211.669" stroke="#0a800a" stroke-width="0.8"/><path d="M822.51 186.011V211.252" stroke="#0a800a" stroke-width="0.8"/><path d="M824.44 186.241V210.835" stroke="#0a800a" stroke-width="0.8"/><path d="M826.37 186.47V210.417" stroke="#0a800a" stroke-width="0.8"/>
<path d="M848.4 184.5L869.5 186.7L869.5 210L848.4 214z" fill="#9aa8b8"/><path d="M850.228 184.691V213.653" stroke="#101010" stroke-width="1.3"/><path d="M854.17 185.102V212.906" stroke="#101010" stroke-width="1.3"/><path d="M858.55 185.558V212.076" stroke="#101010" stroke-width="1.3"/><path d="M862.492 185.969V211.329" stroke="#101010" stroke-width="1.3"/><path d="M866.434 186.38V210.581" stroke="#101010" stroke-width="1.3"/><path d="M848.4 184.5L869.5 186.7L869.5 210L848.4 214z" fill="none"/><path d="M852.199 184.896V213.28" stroke="#f0f0f0" stroke-width="1.2"/><path d="M856.36 185.33V212.491" stroke="#f0f0f0" stroke-width="1.2"/><path d="M860.521 185.764V211.702" stroke="#f0f0f0" stroke-width="1.2"/><path d="M864.463 186.175V210.955" stroke="#f0f0f0" stroke-width="1.2"/>
<path d="M891 184.5L910.7 186.7L910.7 210L891 214z" fill="#8adede"/><path d="M898.81 185.372L910.7 186.7L910.7 210L898.81 212.414z" fill="#6ea4a4"/><path d="M898.81 185.372V212.414" stroke="#5a9090" stroke-width="0.8"/>
<path d="M931.5 184.5L950.7 186.7L950.7 210L931.5 214z" fill="#8ccca0"/><path d="M936.7 185.096L950.7 186.7L950.7 210L936.7 212.917z" fill="#84c498"/><path d="M936.7 185.096V212.917" stroke="#5c9870" stroke-width="1"/>
<text class="tx" x="580.01" y="304.07" font-size="13" fill="#f4f4f4" textLength="19.2">5면</text>
<text class="tx" x="617.61" y="304.07" font-size="13" fill="#f4f4f4" textLength="19.2">6면</text>
<text class="tx" x="656.01" y="304.07" font-size="13" fill="#f4f4f4" textLength="19.2">7면</text>
<text class="tx" x="693.61" y="304.07" font-size="13" fill="#f4f4f4" textLength="19.2">8면</text>
<text class="tx" x="725.76" y="304.07" font-size="13" fill="#f4f4f4" textLength="35.9">통나무</text>
<text class="tx" x="784.13" y="304.07" font-size="13" fill="#f4f4f4" textLength="21.3">U바</text>
<text class="tx" x="820.94" y="304.07" font-size="13" fill="#f4f4f4" textLength="23.9">외부</text>
<text class="tx" x="859.24" y="304.07" font-size="13" fill="#f4f4f4" textLength="23.9">내부</text>
<text class="tx" x="896.74" y="304.07" font-size="13" fill="#f4f4f4" textLength="23.9">코너</text>
<text class="tx" x="931.5" y="304.07" font-size="13" fill="#f4f4f4" textLength="59.8">벽체층으로</text>
<path d="M580.1 258L601.6 261L601.6 282.5L580.1 287.5z" fill="#a8ec30"/><path d="M580.1 263.9L601.6 265.3" stroke="#5c9010" stroke-width="1"/><path d="M580.1 269.8L601.6 269.6" stroke="#5c9010" stroke-width="1"/><path d="M580.1 275.7L601.6 273.9" stroke="#5c9010" stroke-width="1"/><path d="M580.1 281.6L601.6 278.2" stroke="#5c9010" stroke-width="1"/>
<path d="M618 258L638.5 261L638.5 282.5L618 287.5z" fill="#e4a440"/><path d="M616 259v27.5l2 -.8v-25.9z" fill="#8a8a80"/><path d="M618 263.9L638.5 265.3" stroke="#96640f" stroke-width="1"/><path d="M618 269.8L638.5 269.6" stroke="#96640f" stroke-width="1"/><path d="M618 275.7L638.5 273.9" stroke="#96640f" stroke-width="1"/><path d="M618 281.6L638.5 278.2" stroke="#96640f" stroke-width="1"/>
<path d="M656.5 258L677 261L677 282.5L656.5 287.5z" fill="#34b884"/><path d="M654.5 259v27.5l2 -.8v-25.9z" fill="#8a8a80"/><path d="M656.5 262.214L677 264.071" stroke="#18704c" stroke-width="1"/><path d="M656.5 266.429L677 267.143" stroke="#18704c" stroke-width="1"/><path d="M656.5 270.643L677 270.214" stroke="#18704c" stroke-width="1"/><path d="M656.5 274.857L677 273.286" stroke="#18704c" stroke-width="1"/><path d="M656.5 279.071L677 276.357" stroke="#18704c" stroke-width="1"/><path d="M656.5 283.286L677 279.429" stroke="#18704c" stroke-width="1"/>
<path d="M694.2 258L715.7 261L715.7 282.5L694.2 287.5z" fill="#f4a468"/><path d="M694.2 262.917L715.7 264.583" stroke="#b0602c" stroke-width="1"/><path d="M694.2 267.833L715.7 268.167" stroke="#b0602c" stroke-width="1"/><path d="M694.2 272.75L715.7 271.75" stroke="#b0602c" stroke-width="1"/><path d="M694.2 277.667L715.7 275.333" stroke="#b0602c" stroke-width="1"/><path d="M694.2 282.583L715.7 278.917" stroke="#b0602c" stroke-width="1"/>
<path d="M733.5 258L755 261L755 282.5L733.5 287.5z" fill="#ecb434"/><path d="M731.5 259v27.5l2 -.8v-25.9z" fill="#9a8a60"/><path d="M733.5 263.9L755 265.3" stroke="#8c6410" stroke-width="1"/><path d="M733.5 269.8L755 269.6" stroke="#8c6410" stroke-width="1"/><path d="M733.5 275.7L755 273.9" stroke="#8c6410" stroke-width="1"/><path d="M733.5 281.6L755 278.2" stroke="#8c6410" stroke-width="1"/><path d="M733.5 260l21.500 2.500M733.500 266l21.500 1.800M733.500 272l21.500 1M733.500 278l21.500 .3M733.500 284l21.500 -.5" stroke="#fcd870" stroke-width="1.600" fill="none"/>
<path d="M779 276l25-13.500 6-1v6l-25 14-6 3.500z" fill="#58b4bc"/><path d="M779 276l25-13.500v4l-22 12.500z" fill="#8ad8dc"/><path d="M785 281.500l25-14v-6l-3 .8v4l-23 13z" fill="#4a9aa4"/><path d="M779 276l6 2v7l-6-1.500z" fill="#a0e4f0"/><path d="M785 280l3 2-3 2.500z" fill="#000"/>
<path d="M825.500 262l5-2.500v28l-5-5z" fill="#5a7078"/><path d="M830.500 259.500l7.500 2v21l-7.500 5z" fill="#8098a4"/><path d="M832.500 261l2 .5v22l-2 1.500z" fill="#a0b4bc"/>
<path d="M863 262l6-2v28l-6-6z" fill="#54686e"/><path d="M869 260l8 .5v22l-8 5.500z" fill="#7890a0"/><path d="M872 260.500l2.500 0v24l-2.500 1.500z" fill="#90a8b4"/>
<path d="M898.500 261l8 8.500v18l-8-7.500z" fill="#404040"/><path d="M906.500 269.500l11.500-8v19l-11.500 7z" fill="#989898"/><path d="M906.500 269.500v18" stroke="#2a2a2a" stroke-width="1"/>
<rect x="945.300" y="261" width="12" height="23.600" fill="#5cdce4"/><path d="M949 261v23.600M953.500 261v23.600" stroke="#30b0b8" stroke-width=".9"/><rect x="965.300" y="261" width="11.800" height="23.600" fill="#fff"/><path d="M969.300 261v23.600M973.200 261v23.600" stroke="#c8c8c8" stroke-width=".9"/><path d="M958.500 270l5 3.500-5 3.500z" fill="#f01020"/>
<text class="tx" x="585.78" y="378.57" font-size="13" fill="#f4f4f4" textLength="47.8">수직리본</text>
<text class="tx" x="640.08" y="378.57" font-size="13" fill="#f4f4f4" textLength="47.8">수평리본</text>
<text class="tx" x="704.66" y="378.57" font-size="13" fill="#f4f4f4" textLength="64.1">파이프 셔터</text>
<text class="tx" x="774.98" y="378.38" font-size="13" fill="#f4f4f4" textLength="47.8">철문셔터</text>
<g fill="#fff"><rect x="594" y="331.500" width="32.500" height="2.200"/><rect x="594.6" y="333.500" width="1.800" height="28.500"/><rect x="597.57" y="333.500" width="1.800" height="28.500"/><rect x="600.54" y="333.500" width="1.800" height="28.500"/><rect x="603.51" y="333.500" width="1.800" height="28.500"/><rect x="606.48" y="333.500" width="1.800" height="28.500"/><rect x="609.45" y="333.500" width="1.800" height="28.500"/><rect x="612.42" y="333.500" width="1.800" height="28.500"/><rect x="615.39" y="333.500" width="1.800" height="28.500"/><rect x="618.36" y="333.500" width="1.800" height="28.500"/><rect x="621.33" y="333.500" width="1.800" height="28.500"/><rect x="624.3" y="333.500" width="1.800" height="28.500"/></g>
<g fill="#fff"><rect x="647.700" y="332" width="32.300" height="1.500"/><rect x="647.700" y="335.25" width="32.300" height="1.500"/><rect x="647.700" y="338.5" width="32.300" height="1.500"/><rect x="647.700" y="341.75" width="32.300" height="1.500"/><rect x="647.700" y="345" width="32.300" height="1.500"/><rect x="647.700" y="348.25" width="32.300" height="1.500"/><rect x="647.700" y="351.5" width="32.300" height="1.500"/><rect x="647.700" y="354.75" width="32.300" height="1.500"/><rect x="647.700" y="358" width="32.300" height="1.500"/><rect x="647.700" y="361.25" width="32.300" height="1.500"/></g>
<rect x="728.500" y="331.500" width="16" height="30.500" fill="#9a9a9a"/><rect x="730.5" y="332" width="1.100" height="30" fill="#1a1a1a"/><rect x="733.3" y="332" width="1.100" height="30" fill="#1a1a1a"/><rect x="736.1" y="332" width="1.100" height="30" fill="#1a1a1a"/><rect x="738.9" y="332" width="1.100" height="30" fill="#1a1a1a"/><rect x="741.7" y="332" width="1.100" height="30" fill="#1a1a1a"/><rect x="728.500" y="335" width="16" height="1" fill="#303030"/><rect x="728.500" y="338.4" width="16" height="1" fill="#303030"/><rect x="728.500" y="341.8" width="16" height="1" fill="#303030"/><rect x="728.500" y="345.2" width="16" height="1" fill="#303030"/><rect x="728.500" y="348.6" width="16" height="1" fill="#303030"/><rect x="728.500" y="352" width="16" height="1" fill="#303030"/><rect x="728.500" y="355.4" width="16" height="1" fill="#303030"/><rect x="728.500" y="358.8" width="16" height="1" fill="#303030"/><rect x="729" y="342" width="8" height="6" fill="#555" opacity=".7"/><rect x="736" y="350" width="8" height="7" fill="#ccc" opacity=".5"/>
<path d="M786.500 331.500l24-.5v31l-24-1.500z" fill="#b4b4b4"/><path d="M786.500 333l24 -0.5" stroke="#f0f0f0" stroke-width="1"/><path d="M786.500 335.5l24 -0.37" stroke="#f0f0f0" stroke-width="1"/><path d="M786.500 338l24 -0.24" stroke="#f0f0f0" stroke-width="1"/><path d="M786.500 340.5l24 -0.11" stroke="#f0f0f0" stroke-width="1"/><path d="M786.500 343l24 0.02" stroke="#f0f0f0" stroke-width="1"/><path d="M786.500 345.5l24 0.15" stroke="#f0f0f0" stroke-width="1"/><path d="M786.500 348l24 0.28" stroke="#f0f0f0" stroke-width="1"/><path d="M786.500 350.5l24 0.41" stroke="#f0f0f0" stroke-width="1"/><path d="M786.500 353l24 0.54" stroke="#f0f0f0" stroke-width="1"/><path d="M786.500 355.5l24 0.67" stroke="#f0f0f0" stroke-width="1"/><path d="M786.500 358l24 0.8" stroke="#f0f0f0" stroke-width="1"/><path d="M786.500 360.5l24 0.93" stroke="#f0f0f0" stroke-width="1"/><path d="M786.500 334.2l24 -0.5" stroke="#6e6e6e" stroke-width=".7"/><path d="M786.500 336.7l24 -0.37" stroke="#6e6e6e" stroke-width=".7"/><path d="M786.500 339.2l24 -0.24" stroke="#6e6e6e" stroke-width=".7"/><path d="M786.500 341.7l24 -0.11" stroke="#6e6e6e" stroke-width=".7"/><path d="M786.500 344.2l24 0.02" stroke="#6e6e6e" stroke-width=".7"/><path d="M786.500 346.7l24 0.15" stroke="#6e6e6e" stroke-width=".7"/><path d="M786.500 349.2l24 0.28" stroke="#6e6e6e" stroke-width=".7"/><path d="M786.500 351.7l24 0.41" stroke="#6e6e6e" stroke-width=".7"/><path d="M786.500 354.2l24 0.54" stroke="#6e6e6e" stroke-width=".7"/><path d="M786.500 356.7l24 0.67" stroke="#6e6e6e" stroke-width=".7"/><path d="M786.500 359.2l24 0.8" stroke="#6e6e6e" stroke-width=".7"/>
<circle cx="848.5" cy="363.2" r="6.500" fill="#000"/><path d="M846.7 359.2v8l5.200-4z" fill="#fff"/>
<text class="tx" x="862.9" y="367.88" font-size="13" fill="#f4f4f4" textLength="121.2">설명_철문 파이프 셔터</text>
<circle cx="533.6" cy="412.3" r="6.500" fill="#000"/><path d="M531.8 408.3v8l5.200-4z" fill="#fff"/>
<text class="tx" x="547.9" y="416.88" font-size="13" fill="#f4f4f4" textLength="88.7">설명_벽체층으로</text>
<circle cx="652.2" cy="412.3" r="6.500" fill="#000"/><path d="M650.4 408.3v8l5.200-4z" fill="#fff"/>
<text class="tx" x="666.5" y="416.88" font-size="13" fill="#f4f4f4" textLength="105">설명_수평 블라인드</text>
<circle cx="787.5" cy="412.3" r="6.500" fill="#000"/><path d="M785.7 408.3v8l5.200-4z" fill="#fff"/>
<text class="tx" x="801.9" y="416.88" font-size="13" fill="#f4f4f4" textLength="105">설명_수직 블라인드</text>
<circle cx="922.4" cy="412.3" r="6.500" fill="#000"/><path d="M920.6 408.3v8l5.200-4z" fill="#fff"/>
<text class="tx" x="936.6" y="416.88" font-size="13" fill="#f4f4f4" textLength="81.1">설명_철문 셔터</text>
<text class="tx" x="733.92" y="438.68" font-size="13" fill="#f4f4f4" textLength="76.8">패널_블라인드</text>
<rect x="520.500" y="426.500" width="15" height="17" fill="#4c617c" stroke="#62a8ec" stroke-width="1"/><circle cx="527.500" cy="436" r="4.300" fill="#c8ccd4"/><circle cx="530" cy="432.500" r="3.600" fill="#eceef2"/>
<rect x="494" y="340" width="94" height="3" fill="#008888"/></svg>
<span class="k" style="left:524px;top:199.2px;font-size:13px">벽패널</span>
<span class="k" style="left:524px;top:272.8px;font-size:13px">사이딩</span>
<span class="k" style="left:523.6px;top:347.5px;font-size:13px">블라인드</span>
<span class="k" style="left:578.1px;top:217.5px;font-size:13px">1골</span>
<span class="k" style="left:616.2px;top:217.5px;font-size:13px">2골</span>
<span class="k" style="left:653.5px;top:217.5px;font-size:13px">3골</span>
<span class="k" style="left:691.5px;top:217.5px;font-size:13px">4골</span>
<span class="k" style="left:729.6px;top:217.5px;font-size:13px">5골</span>
<span class="k" style="left:768.1px;top:217.5px;font-size:13px">평판</span>
<span class="k" style="left:806.2px;top:217.5px;font-size:13px">잔골</span>
<span class="k" style="left:840.15px;top:217.5px;font-size:13px">웨이브</span>
<span class="k" style="left:882.15px;top:217.5px;font-size:13px">세일링</span>
<span class="k" style="left:917.3px;top:217.5px;font-size:13px">3:7골</span>
<span class="k" style="left:577.9px;top:291.4px;font-size:13px">5면</span>
<span class="k" style="left:615.5px;top:291.4px;font-size:13px">6면</span>
<span class="k" style="left:653.9px;top:291.4px;font-size:13px">7면</span>
<span class="k" style="left:691.5px;top:291.4px;font-size:13px">8면</span>
<span class="k" style="left:726.15px;top:291.4px;font-size:13px">통나무</span>
<span class="k" style="left:783.1px;top:291.4px;font-size:13px">U바</span>
<span class="k" style="left:821.2px;top:291.4px;font-size:13px">외부</span>
<span class="k" style="left:859.5px;top:291.4px;font-size:13px">내부</span>
<span class="k" style="left:897px;top:291.4px;font-size:13px">코너</span>
<span class="k" style="left:932.15px;top:291.4px;font-size:13px">벽체층으로</span>
<span class="k" style="left:586.3px;top:365.9px;font-size:13px">수직리본</span>
<span class="k" style="left:640.6px;top:365.9px;font-size:13px">수평리본</span>
<span class="k" style="left:701.6px;top:365.9px;font-size:13px">파이프 셔터</span>
<span class="k" style="left:775.5px;top:365.7px;font-size:13px">철문셔터</span>
<span class="k" style="left:862.9px;top:355.2px;font-size:13px">설명_철문 파이프 셔터</span>
<span class="k" style="left:547.9px;top:404.2px;font-size:13px">설명_벽체층으로</span>
<span class="k" style="left:666.5px;top:404.2px;font-size:13px">설명_수평 블라인드</span>
<span class="k" style="left:801.9px;top:404.2px;font-size:13px">설명_수직 블라인드</span>
<span class="k" style="left:936.6px;top:404.2px;font-size:13px">설명_철문 셔터</span>
<span class="k" style="left:731.35px;top:426px;font-size:13px">패널_블라인드</span>
</div>
<div class="layer" id="L_dialog">
<div style="left:153px;top:311.5px;width:337px;height:280px;background:#f0f0f0;border-radius:8px;box-shadow:0 0 0 1px rgba(120,120,120,.55);"></div>
<div style="left:153px;top:311.5px;width:337px;height:30px;background:#f3f3f3;border-radius:8px 8px 0 0;"></div>
<div style="left:161.5px;top:351px;width:143px;height:205.5px;border:1px solid #dcdcdc;"></div>
<div style="left:313px;top:351.3px;width:170.7px;height:108.4px;border:1px solid #dcdcdc;"></div>
<div style="left:313px;top:472px;width:170.7px;height:84.7px;border:1px solid #dcdcdc;"></div>
<div style="left:169.7px;top:365.2px;width:126.4px;height:186.7px;background:#000;"></div>
<div style="left:402px;top:368px;width:72.7px;height:17.6px;background:#fff;border:1px solid #7a7a7a;border-bottom-color:#555;"></div>
<div style="left:402px;top:392.2px;width:72.7px;height:17.6px;background:#fff;border:1px solid #7a7a7a;border-bottom-color:#555;"></div>
<div style="left:415px;top:416px;width:59.7px;height:17.6px;background:#fff;border:1px solid #7a7a7a;border-bottom-color:#555;"></div>
<div style="left:402px;top:440.2px;width:72.7px;height:17.6px;background:#fff;border:1px solid #7a7a7a;border-bottom-color:#555;"></div>
<div style="left:374px;top:489.5px;width:100.7px;height:17.6px;background:#fff;border:1px solid #7a7a7a;border-bottom-color:#555;"></div>
<div style="left:386px;top:513.5px;width:88.7px;height:17.6px;background:#fff;border:1px solid #7a7a7a;border-bottom-color:#555;"></div>
<div style="left:414px;top:537.4px;width:60.7px;height:17.6px;background:#fff;border:1px solid #7a7a7a;border-bottom-color:#555;"></div>
<div style="left:421px;top:565px;width:62px;height:18.8px;background:#fdfdfd;border:1px solid #0078d4;border-radius:4.5px;"></div>
<svg class="ov" width="1147" height="817" viewBox="0 0 1147 817"><text class="tx" x="162.5" y="331.23" font-size="12.6" fill="#9a9a9a" textLength="73.7">수직 블라인더</text>
<path d="M470 321l9.500 9.500M479.500 321l-9.500 9.500" stroke="#8c8c8c" stroke-width="1.100"/>
<g fill="none" stroke="#fff" stroke-width="1.050"><path d="M205.200 424.300l58-31 1.700 1.200.3 3.200-57.500 31-2.500-1.200zM205.200 424.300l2.500 1.400 57.200-31M207.700 425.700v3"/><path d="M208.5 428.4V517.7"/><path d="M211.1 427.0V516.3"/><path d="M213.7 425.6V514.9"/><path d="M216.3 424.2V513.5"/><path d="M218.9 422.8V512.0"/><path d="M221.5 421.4V510.6"/><path d="M224.0 420.1V509.2"/><path d="M226.6 418.7V507.8"/><path d="M229.2 417.3V506.4"/><path d="M231.8 415.9V505.0"/><path d="M234.4 414.5V503.6"/><path d="M237.0 413.1V502.1"/><path d="M239.6 411.7V500.7"/><path d="M242.2 410.3V499.3"/><path d="M244.8 408.9V497.9"/><path d="M247.4 407.5V496.5"/><path d="M249.9 406.1V495.1"/><path d="M252.5 404.8V493.7"/><path d="M255.1 403.4V492.2"/><path d="M257.7 402.0V490.8"/><path d="M260.3 400.6V489.4"/><path d="M262.9 399.2V488.0"/><path d="M208.500 517.700l2.800-1.500v-87"/><path d="M208.5 517.7L209.9 516.9"/><path d="M211.1 516.3L212.5 515.5"/><path d="M213.7 514.9L215.1 514.1"/><path d="M216.3 513.5L217.7 512.7"/><path d="M218.9 512.0L220.3 511.2"/><path d="M221.5 510.6L222.8 509.8"/><path d="M224.0 509.2L225.4 508.4"/><path d="M226.6 507.8L228.0 507.0"/><path d="M229.2 506.4L230.6 505.6"/><path d="M231.8 505.0L233.2 504.2"/><path d="M234.4 503.6L235.8 502.8"/><path d="M237.0 502.1L238.4 501.3"/><path d="M239.6 500.7L241.0 499.9"/><path d="M242.2 499.3L243.6 498.5"/><path d="M244.8 497.9L246.2 497.1"/><path d="M247.4 496.5L248.7 495.7"/><path d="M249.9 495.1L251.3 494.3"/><path d="M252.5 493.7L253.9 492.9"/><path d="M255.1 492.2L256.5 491.4"/><path d="M257.7 490.8L259.1 490.0"/><path d="M260.3 489.4L261.7 488.6"/></g>
<g stroke="#28f0f0" stroke-width="1.100" fill="none"><path d="M189.700 433.500l11.500-7.200"/><path d="M264.600 390l12-6M268 391.600l12.700-5M269 393.300l11-4.500"/><path d="M190.400 526.500l10.300-5M195.700 524v13M190.400 539l10.300-4.800"/></g>
<text class="tx" x="322.4" y="381.32" font-size="12" fill="#000" textLength="71.7">A: 상단 높이:</text>
<text class="tx" x="322.4" y="404.92" font-size="12" fill="#000" textLength="72.1">B: 지지대 폭:</text>
<text class="tx" x="322.4" y="428.82" font-size="12" fill="#000" textLength="84.6">C: 지지대 두께:</text>
<text class="tx" x="322.4" y="452.32" font-size="12" fill="#000" textLength="72.7">D: 시작 높이:</text>
<text class="tx" x="322.4" y="501.62" font-size="12" fill="#000" textLength="44">리본 폭:</text>
<text class="tx" x="322.4" y="525.62" font-size="12" fill="#000" textLength="56">리본 두께:</text>
<text class="tx" x="322.4" y="549.52" font-size="12" fill="#000" textLength="84">리본 회전 각도:</text>
<text class="tx" x="404.4" y="379.32" font-size="12" fill="#000" textLength="23.7" lengthAdjust="spacingAndGlyphs">2500</text>
<text class="tx" x="404.4" y="403.52" font-size="12" fill="#000" textLength="17.8" lengthAdjust="spacingAndGlyphs">100</text>
<text class="tx" x="417.4" y="427.32" font-size="12" fill="#000" textLength="11.8" lengthAdjust="spacingAndGlyphs">40</text>
<text class="tx" x="404.4" y="451.52" font-size="12" fill="#000" textLength="17.8" lengthAdjust="spacingAndGlyphs">300</text>
<text class="tx" x="376.4" y="500.82" font-size="12" fill="#000" textLength="11.8" lengthAdjust="spacingAndGlyphs">80</text>
<text class="tx" x="388.4" y="524.82" font-size="12" fill="#000" textLength="5.9" lengthAdjust="spacingAndGlyphs">2</text>
<text class="tx" x="416.4" y="548.72" font-size="12" fill="#000" textLength="11.8" lengthAdjust="spacingAndGlyphs">45</text>
<text class="tx" x="161.6" y="577.62" font-size="12" fill="#000" textLength="109.7">CYCAD FANTASMO</text>
<text class="tx" x="439.8" y="578.52" font-size="12" fill="#000" textLength="24">확인</text></svg>
<span class="k" style="left:162.5px;top:318.94px;font-size:12.6px">수직 블라인더</span>
<span class="t" style="left:180.5px;top:429.5px;font-size:11.5px;color:#f4f4f4;transform:scaleX(.85);transform-origin:0 0;">A</span>
<span class="t" style="left:278.8px;top:373.5px;font-size:11.5px;color:#f4f4f4;transform:scaleX(.85);transform-origin:0 0;">B</span>
<span class="t" style="left:275px;top:393.3px;font-size:11.5px;color:#f4f4f4;transform:scaleX(.85);transform-origin:0 0;">C</span>
<span class="t" style="left:208.5px;top:524.3px;font-size:11.5px;color:#f4f4f4;transform:scaleX(.85);transform-origin:0 0;">D</span>
<span class="k" style="left:322.4px;top:369.8px;font-size:12px">A: 상단 높이:</span>
<span class="k" style="left:322.4px;top:393.4px;font-size:12px">B: 지지대 폭:</span>
<span class="k" style="left:322.4px;top:417.3px;font-size:12px">C: 지지대 두께:</span>
<span class="k" style="left:322.4px;top:440.8px;font-size:12px">D: 시작 높이:</span>
<span class="k" style="left:322.4px;top:490.1px;font-size:12px">리본 폭:</span>
<span class="k" style="left:322.4px;top:514.1px;font-size:12px">리본 두께:</span>
<span class="k" style="left:322.4px;top:538px;font-size:12px">리본 회전 각도:</span>
<span class="k" style="left:404.4px;top:367.8px;font-size:12px">2500</span>
<span class="k" style="left:404.4px;top:392px;font-size:12px">100</span>
<span class="k" style="left:417.4px;top:415.8px;font-size:12px">40</span>
<span class="k" style="left:404.4px;top:440px;font-size:12px">300</span>
<span class="k" style="left:376.4px;top:489.3px;font-size:12px">80</span>
<span class="k" style="left:388.4px;top:513.3px;font-size:12px">2</span>
<span class="k" style="left:416.4px;top:537.2px;font-size:12px">45</span>
<span class="k" style="left:161.6px;top:566.1px;font-size:12px">CYCAD FANTASMO</span>
<span class="k" style="left:441px;top:567px;font-size:12px">확인</span>
</div>
</div></body></html>
